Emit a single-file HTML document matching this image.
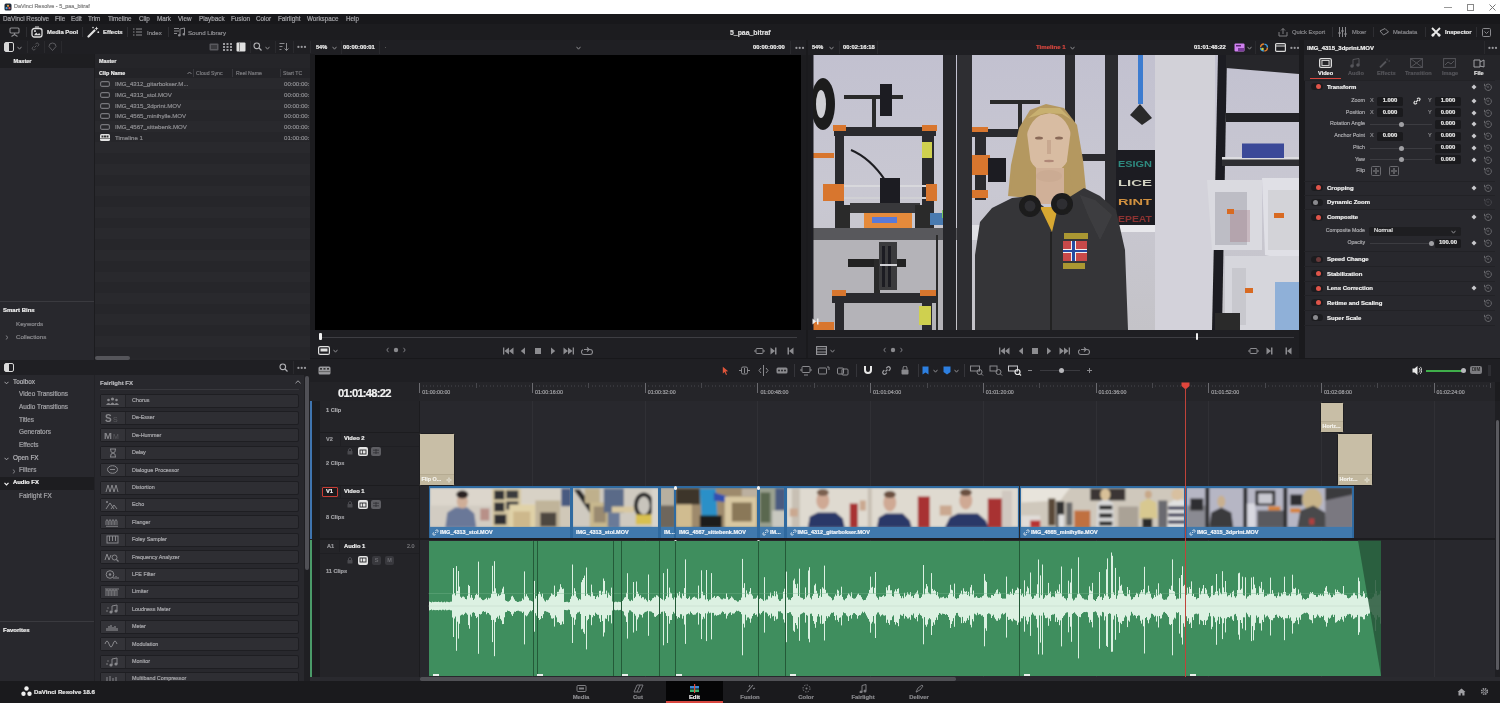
<!DOCTYPE html>
<html><head><meta charset="utf-8">
<style>
*{margin:0;padding:0;box-sizing:border-box}
html,body{width:1500px;height:703px;overflow:hidden;background:#1c1c1f;font-family:"Liberation Sans",sans-serif;color:#c8c8c8;position:relative}
.a{position:absolute;display:block}
.t{position:absolute;white-space:nowrap;line-height:1;-webkit-text-stroke:0.2px currentColor}
</style></head><body>
<div style="position:absolute;left:0;top:0;width:1500px;height:703px;will-change:transform">
<div class="a" style="left:0px;top:0px;width:1500px;height:14px;background:#ffffff;"></div>
<svg class="a" style="left:4px;top:3px;" width="8" height="8" viewBox="0 0 8 8"><rect x="0.5" y="0.5" width="7" height="7" rx="1.5" fill="#1d2a3a"/><circle cx="4" cy="2.8" r="1.1" fill="#e8a040"/><circle cx="2.6" cy="5.2" r="1.1" fill="#4aa0e0"/><circle cx="5.4" cy="5.2" r="1.1" fill="#e05050"/></svg>
<div class="t" style="left:14px;top:4.25px;font-size:5.5px;color:#808080;">DaVinci Resolve - 5_paa_bitraf</div>
<div class="a" style="left:1444px;top:7px;width:8px;height:1px;background:#999;"></div>
<div class="a" style="left:1467px;top:4px;width:7px;height:7px;border:1px solid #888"></div>
<svg class="a" style="left:1489px;top:3.5px;" width="7" height="7" viewBox="0 0 7 7"><path d="M0.5 0.5L6.5 6.5M6.5 0.5L0.5 6.5" stroke="#777" stroke-width="1"/></svg>
<div class="a" style="left:0px;top:14px;width:1500px;height:10px;background:#18181b;"></div>
<div class="t" style="left:3px;top:15.8px;font-size:6.3px;color:#a4a4a8;width:49px">DaVinci Resolve</div>
<div class="t" style="left:55px;top:15.8px;font-size:6.3px;color:#a4a4a8;width:13px">File</div>
<div class="t" style="left:71px;top:15.8px;font-size:6.3px;color:#a4a4a8;width:15px">Edit</div>
<div class="t" style="left:88px;top:15.8px;font-size:6.3px;color:#a4a4a8;width:17px">Trim</div>
<div class="t" style="left:108px;top:15.8px;font-size:6.3px;color:#a4a4a8;width:29px">Timeline</div>
<div class="t" style="left:139px;top:15.8px;font-size:6.3px;color:#a4a4a8;width:15px">Clip</div>
<div class="t" style="left:157px;top:15.8px;font-size:6.3px;color:#a4a4a8;width:19px">Mark</div>
<div class="t" style="left:178px;top:15.8px;font-size:6.3px;color:#a4a4a8;width:17px">View</div>
<div class="t" style="left:199px;top:15.8px;font-size:6.3px;color:#a4a4a8;width:29px">Playback</div>
<div class="t" style="left:231px;top:15.8px;font-size:6.3px;color:#a4a4a8;width:22px">Fusion</div>
<div class="t" style="left:256px;top:15.8px;font-size:6.3px;color:#a4a4a8;width:19px">Color</div>
<div class="t" style="left:278px;top:15.8px;font-size:6.3px;color:#a4a4a8;width:27px">Fairlight</div>
<div class="t" style="left:307px;top:15.8px;font-size:6.3px;color:#a4a4a8;width:36px">Workspace</div>
<div class="t" style="left:346px;top:15.8px;font-size:6.3px;color:#a4a4a8;width:17px">Help</div>
<div class="a" style="left:0px;top:24px;width:1500px;height:16px;background:#1c1c1f;"></div>
<div class="a" style="left:26px;top:27px;width:1px;height:10px;background:#2e2e32;"></div>
<div class="a" style="left:82px;top:27px;width:1px;height:10px;background:#2e2e32;"></div>
<div class="a" style="left:127px;top:27px;width:1px;height:10px;background:#2e2e32;"></div>
<div class="a" style="left:168px;top:27px;width:1px;height:10px;background:#2e2e32;"></div>
<svg class="a" style="left:9px;top:27px;" width="11" height="10" viewBox="0 0 11 10"><rect x="1" y="1" width="9" height="5" rx="1" fill="none" stroke="#8c8c90" stroke-width="1.1"/><path d="M5.5 6v1.5M2.5 9.5l3-2l3 2" stroke="#8c8c90" stroke-width="1.1" fill="none"/></svg>
<svg class="a" style="left:31px;top:26px;" width="12" height="12" viewBox="0 0 12 12"><rect x="1" y="2.5" width="10" height="8.5" rx="2.2" fill="none" stroke="#dcdcdc" stroke-width="1.3"/><path d="M3 9.2l2.2-2.6l1.6 1.6l1.4-1.2l1.6 2.2z" fill="#dcdcdc"/><rect x="3" y="4.3" width="2" height="1.5" fill="#dcdcdc"/><path d="M4 1h4" stroke="#dcdcdc" stroke-width="1"/></svg>
<div class="t" style="left:47px;top:30.25px;font-size:5.9px;color:#e6e6e6;font-weight:bold;">Media Pool</div>
<svg class="a" style="left:87px;top:26px;" width="13" height="12" viewBox="0 0 13 12"><path d="M1.5 10.5L7.5 4.5" stroke="#e0e0e0" stroke-width="2.2" stroke-linecap="round"/><path d="M9.5 0.5l0.6 1.4l1.4 0.6l-1.4 0.6l-0.6 1.4l-0.6-1.4l-1.4-0.6l1.4-0.6z" fill="#e0e0e0"/><circle cx="11.3" cy="6.2" r="0.9" fill="#e0e0e0"/><circle cx="6" cy="1.6" r="0.8" fill="#e0e0e0"/></svg>
<div class="t" style="left:103px;top:30.25px;font-size:5.9px;color:#e6e6e6;font-weight:bold;">Effects</div>
<svg class="a" style="left:133px;top:28px;" width="9" height="8" viewBox="0 0 9 8"><path d="M0 1h1.5M3 1h6M0 4h1.5M3 4h6M0 7h1.5M3 7h6" stroke="#8a8a8e" stroke-width="1"/></svg>
<div class="t" style="left:147px;top:30.20px;font-size:6px;color:#8e8e92;">Index</div>
<svg class="a" style="left:174px;top:27px;" width="11" height="10" viewBox="0 0 11 10"><path d="M0 1.5h5M0 4h5M0 6.5h3" stroke="#8a8a8e" stroke-width="1"/><path d="M6 8V2l4.5-1v6" stroke="#8a8a8e" stroke-width="1" fill="none"/><circle cx="5.3" cy="8.3" r="1.3" fill="#8a8a8e"/><circle cx="9.8" cy="7.3" r="1.3" fill="#8a8a8e"/></svg>
<div class="t" style="left:188px;top:30.15px;font-size:6.1px;color:#8e8e92;">Sound Library</div>
<div class="t" style="left:730px;top:29.75px;font-size:6.9px;color:#dcdcdc;font-weight:bold;">5_paa_bitraf</div>
<div class="a" style="left:1332px;top:27px;width:1px;height:10px;background:#2e2e32;"></div>
<div class="a" style="left:1373px;top:27px;width:1px;height:10px;background:#2e2e32;"></div>
<div class="a" style="left:1425px;top:27px;width:1px;height:10px;background:#2e2e32;"></div>
<div class="a" style="left:1476px;top:27px;width:1px;height:10px;background:#2e2e32;"></div>
<svg class="a" style="left:1278px;top:27px;" width="10" height="10" viewBox="0 0 10 10"><path d="M1 5v4h8V5" stroke="#7c7c80" fill="none" stroke-width="1"/><path d="M5 7V1.5M3 3.5l2-2l2 2" stroke="#7c7c80" fill="none" stroke-width="1"/></svg>
<div class="t" style="left:1292px;top:30.30px;font-size:5.8px;color:#86868a;">Quick Export</div>
<svg class="a" style="left:1338px;top:27px;" width="9" height="10" viewBox="0 0 9 10"><path d="M1.5 0v10M4.5 0v10M7.5 0v10" stroke="#8a8a8e" stroke-width="1"/><rect x="0.5" y="5" width="2" height="2" fill="#8a8a8e"/><rect x="3.5" y="3" width="2" height="2" fill="#8a8a8e"/><rect x="6.5" y="6" width="2" height="2" fill="#8a8a8e"/></svg>
<div class="t" style="left:1352px;top:30.30px;font-size:5.8px;color:#86868a;">Mixer</div>
<svg class="a" style="left:1379px;top:28px;" width="10" height="8" viewBox="0 0 10 8"><path d="M1 3l5-2.5l3.5 3.5l-5 3z" fill="none" stroke="#86868a" stroke-width="1"/></svg>
<div class="t" style="left:1393px;top:30.30px;font-size:5.8px;color:#86868a;">Metadata</div>
<svg class="a" style="left:1431px;top:27px;" width="10" height="10" viewBox="0 0 10 10"><path d="M1 1l8 8M9 1L1 9" stroke="#e8e8e8" stroke-width="1.8"/><circle cx="2" cy="8" r="1.5" fill="#e8e8e8"/><circle cx="8" cy="8" r="1.5" fill="#e8e8e8"/></svg>
<div class="t" style="left:1445px;top:30.25px;font-size:5.9px;color:#e8e8e8;font-weight:bold;">Inspector</div>
<svg class="a" style="left:1482px;top:28px;" width="9" height="9" viewBox="0 0 9 9"><rect x="0.5" y="0.5" width="8" height="8" rx="1" fill="none" stroke="#8a8a8e" stroke-width="1"/><path d="M2.5 3.5l2 2l2-2" stroke="#8a8a8e" fill="none" stroke-width="1"/></svg>
<div class="a" style="left:0px;top:40px;width:315px;height:14px;background:#1f1f23;"></div>
<div class="a" style="left:27px;top:41px;width:1px;height:12px;background:#2a2a2e;"></div>
<div class="a" style="left:44px;top:41px;width:1px;height:12px;background:#2a2a2e;"></div>
<div class="a" style="left:61px;top:41px;width:1px;height:12px;background:#2a2a2e;"></div>
<div class="a" style="left:250px;top:41px;width:1px;height:12px;background:#2a2a2e;"></div>
<div class="a" style="left:275px;top:41px;width:1px;height:12px;background:#2a2a2e;"></div>
<div class="a" style="left:293px;top:41px;width:1px;height:12px;background:#2a2a2e;"></div>
<div class="a" style="left:310px;top:41px;width:1px;height:12px;background:#2a2a2e;"></div>
<svg class="a" style="left:4px;top:42px;" width="10" height="10" viewBox="0 0 10 10"><rect x="0.5" y="0.5" width="9" height="9" rx="1.5" fill="none" stroke="#d8d8d8" stroke-width="1"/><rect x="1" y="1" width="4" height="8" fill="#d8d8d8"/></svg>
<svg class="a" style="left:17px;top:46px;" width="5" height="4" viewBox="0 0 5 4"><path d="M0.5 0.8L2.5 3.2L4.5 0.8" stroke="#8a8a8e" fill="none" stroke-width="1"/></svg>
<svg class="a" style="left:31px;top:42px;" width="9" height="9" viewBox="0 0 9 9"><path d="M3.5 5.5L5.5 3.5M2.5 4.5l-1 1a1.6 1.6 0 0 0 2.2 2.2l1-1M6.5 4.5l1-1a1.6 1.6 0 0 0-2.2-2.2l-1 1" stroke="#5c5c60" fill="none" stroke-width="1"/></svg>
<svg class="a" style="left:48px;top:42px;" width="9" height="9" viewBox="0 0 9 9"><path d="M1 4.5a3.5 3.5 0 1 1 7 0l-3.5 4z" stroke="#5c5c60" fill="none" stroke-width="1"/></svg>
<svg class="a" style="left:209px;top:43px;" width="10" height="8" viewBox="0 0 10 8"><rect x="0.5" y="0.5" width="9" height="7" rx="1" fill="#59595e"/><rect x="2" y="2" width="6" height="4" fill="#3a3a3e"/></svg>
<svg class="a" style="left:223px;top:43px;" width="9" height="8" viewBox="0 0 9 8"><g fill="#9a9a9e"><rect x="0" y="0" width="2" height="2"/><rect x="3.5" y="0" width="2" height="2"/><rect x="7" y="0" width="2" height="2"/><rect x="0" y="3" width="2" height="2"/><rect x="3.5" y="3" width="2" height="2"/><rect x="7" y="3" width="2" height="2"/><rect x="0" y="6" width="2" height="2"/><rect x="3.5" y="6" width="2" height="2"/><rect x="7" y="6" width="2" height="2"/></g></svg>
<svg class="a" style="left:236px;top:42px;" width="10" height="10" viewBox="0 0 10 10"><rect x="0.5" y="0.5" width="9" height="9" rx="1" fill="#e0e0e0"/><rect x="3" y="1" width="0.8" height="8" fill="#777"/></svg>
<svg class="a" style="left:253px;top:42px;" width="9" height="9" viewBox="0 0 9 9"><circle cx="3.8" cy="3.8" r="2.8" stroke="#b0b0b4" fill="none" stroke-width="1.1"/><path d="M6 6l2.5 2.5" stroke="#b0b0b4" stroke-width="1.2"/></svg>
<svg class="a" style="left:265px;top:46px;" width="5" height="4" viewBox="0 0 5 4"><path d="M0.5 0.8L2.5 3.2L4.5 0.8" stroke="#8a8a8e" fill="none" stroke-width="1"/></svg>
<svg class="a" style="left:279px;top:42px;" width="10" height="10" viewBox="0 0 10 10"><path d="M0.5 1.5h5M0.5 4.5h3M0.5 7.5h2" stroke="#8a8a8e" stroke-width="1"/><path d="M7.5 1v7.5M5.5 6.5l2 2l2-2" stroke="#8a8a8e" fill="none" stroke-width="1"/></svg>
<svg class="a" style="left:296.5px;top:45.2px;" width="11" height="4" viewBox="0 0 11 4"><circle cx="1.4" cy="1.9" r="1.1" fill="#9a9a9e"/><circle cx="4.7" cy="1.9" r="1.1" fill="#9a9a9e"/><circle cx="8" cy="1.9" r="1.1" fill="#9a9a9e"/></svg>
<div class="a" style="left:0px;top:54px;width:95px;height:306px;background:#28282d;"></div>
<div class="a" style="left:0px;top:54px;width:95px;height:14px;background:#1e1e21;"></div>
<div class="t" style="left:13.5px;top:58.50px;font-size:5.6px;color:#f0f0f0;font-weight:bold;">Master</div>
<div class="a" style="left:0px;top:301px;width:95px;height:1px;background:#3a3a3f;"></div>
<div class="t" style="left:3px;top:307.30px;font-size:6.0px;color:#f0f0f0;font-weight:bold;">Smart Bins</div>
<div class="t" style="left:16px;top:321.40px;font-size:6.2px;color:#8c8c90;">Keywords</div>
<div class="t" style="left:16px;top:334.20px;font-size:6.2px;color:#8c8c90;">Collections</div>
<svg class="a" style="left:5px;top:335px;" width="4" height="5" viewBox="0 0 4 5"><path d="M0.8 0.5L3 2.5L0.8 4.5" stroke="#8a8a8e" fill="none" stroke-width="0.9"/></svg>
<div class="a" style="left:95px;top:54px;width:215px;height:306px;background:#27272b;"></div>
<div class="a" style="left:94px;top:54px;width:1px;height:306px;background:#1c1c1f;"></div>
<div class="a" style="left:95px;top:54px;width:215px;height:14px;background:#252529;"></div>
<div class="t" style="left:99px;top:58.80px;font-size:5.4px;color:#e8e8e8;font-weight:bold;">Master</div>
<div class="a" style="left:95px;top:68px;width:215px;height:10px;background:#232327;"></div>
<div class="t" style="left:99px;top:70.80px;font-size:5.4px;color:#ececec;font-weight:bold;">Clip Name</div>
<svg class="a" style="left:187px;top:71px;" width="5" height="4" viewBox="0 0 5 4"><path d="M0.5 3L2.5 1L4.5 3" stroke="#8a8a8e" fill="none" stroke-width="0.9"/></svg>
<div class="a" style="left:193px;top:69px;width:1px;height:8px;background:#38383d;"></div>
<div class="a" style="left:232px;top:69px;width:1px;height:8px;background:#38383d;"></div>
<div class="a" style="left:280px;top:69px;width:1px;height:8px;background:#38383d;"></div>
<div class="t" style="left:196px;top:70.90px;font-size:5.2px;color:#7a7a7e;">Cloud Sync</div>
<div class="t" style="left:236px;top:70.90px;font-size:5.2px;color:#7a7a7e;">Reel Name</div>
<div class="t" style="left:283px;top:70.90px;font-size:5.2px;color:#7a7a7e;">Start TC</div>
<div class="a" style="left:95px;top:78px;width:215px;height:11px;background:#29292d;"></div>
<div class="a" style="left:95px;top:89px;width:215px;height:11px;background:#26262a;"></div>
<div class="a" style="left:95px;top:100px;width:215px;height:11px;background:#29292d;"></div>
<div class="a" style="left:95px;top:110px;width:215px;height:11px;background:#26262a;"></div>
<div class="a" style="left:95px;top:121px;width:215px;height:11px;background:#29292d;"></div>
<div class="a" style="left:95px;top:132px;width:215px;height:11px;background:#26262a;"></div>
<div class="a" style="left:95px;top:142px;width:215px;height:11px;background:#29292d;"></div>
<div class="a" style="left:95px;top:153px;width:215px;height:11px;background:#26262a;"></div>
<div class="a" style="left:95px;top:164px;width:215px;height:11px;background:#29292d;"></div>
<div class="a" style="left:95px;top:175px;width:215px;height:11px;background:#26262a;"></div>
<div class="a" style="left:95px;top:186px;width:215px;height:11px;background:#29292d;"></div>
<div class="a" style="left:95px;top:196px;width:215px;height:11px;background:#26262a;"></div>
<div class="a" style="left:95px;top:207px;width:215px;height:11px;background:#29292d;"></div>
<div class="a" style="left:95px;top:218px;width:215px;height:11px;background:#26262a;"></div>
<div class="a" style="left:95px;top:228px;width:215px;height:11px;background:#29292d;"></div>
<div class="a" style="left:95px;top:239px;width:215px;height:11px;background:#26262a;"></div>
<div class="a" style="left:95px;top:250px;width:215px;height:11px;background:#29292d;"></div>
<div class="a" style="left:95px;top:261px;width:215px;height:11px;background:#26262a;"></div>
<div class="a" style="left:95px;top:272px;width:215px;height:11px;background:#29292d;"></div>
<div class="a" style="left:95px;top:282px;width:215px;height:11px;background:#26262a;"></div>
<div class="a" style="left:95px;top:293px;width:215px;height:11px;background:#29292d;"></div>
<div class="a" style="left:95px;top:304px;width:215px;height:11px;background:#26262a;"></div>
<div class="a" style="left:95px;top:314px;width:215px;height:11px;background:#29292d;"></div>
<div class="a" style="left:95px;top:325px;width:215px;height:11px;background:#26262a;"></div>
<div class="a" style="left:95px;top:336px;width:215px;height:11px;background:#29292d;"></div>
<div class="a" style="left:95px;top:347px;width:215px;height:11px;background:#26262a;"></div>
<svg class="a" style="left:100px;top:81.2px;" width="10" height="6" viewBox="0 0 10 6"><rect x="0.6" y="0.6" width="8.8" height="4.8" rx="1.5" fill="none" stroke="#77777c" stroke-width="1.1"/></svg>
<div class="t" style="left:115px;top:81.15px;font-size:6.1px;color:#8e8e92;">IMG_4312_gitarbokser.M...</div>
<div class="t" style="left:284px;top:81.15px;font-size:6.1px;color:#8e8e92;">00:00:00:</div>
<svg class="a" style="left:100px;top:91.95px;" width="10" height="6" viewBox="0 0 10 6"><rect x="0.6" y="0.6" width="8.8" height="4.8" rx="1.5" fill="none" stroke="#77777c" stroke-width="1.1"/></svg>
<div class="t" style="left:115px;top:91.90px;font-size:6.1px;color:#8e8e92;">IMG_4313_stol.MOV</div>
<div class="t" style="left:284px;top:91.90px;font-size:6.1px;color:#8e8e92;">00:00:00:</div>
<svg class="a" style="left:100px;top:102.7px;" width="10" height="6" viewBox="0 0 10 6"><rect x="0.6" y="0.6" width="8.8" height="4.8" rx="1.5" fill="none" stroke="#77777c" stroke-width="1.1"/></svg>
<div class="t" style="left:115px;top:102.65px;font-size:6.1px;color:#8e8e92;">IMG_4315_3dprint.MOV</div>
<div class="t" style="left:284px;top:102.65px;font-size:6.1px;color:#8e8e92;">00:00:00:</div>
<svg class="a" style="left:100px;top:113.45px;" width="10" height="6" viewBox="0 0 10 6"><rect x="0.6" y="0.6" width="8.8" height="4.8" rx="1.5" fill="none" stroke="#77777c" stroke-width="1.1"/></svg>
<div class="t" style="left:115px;top:113.40px;font-size:6.1px;color:#8e8e92;">IMG_4565_minihylle.MOV</div>
<div class="t" style="left:284px;top:113.40px;font-size:6.1px;color:#8e8e92;">00:00:00:</div>
<svg class="a" style="left:100px;top:124.2px;" width="10" height="6" viewBox="0 0 10 6"><rect x="0.6" y="0.6" width="8.8" height="4.8" rx="1.5" fill="none" stroke="#77777c" stroke-width="1.1"/></svg>
<div class="t" style="left:115px;top:124.15px;font-size:6.1px;color:#8e8e92;">IMG_4567_sittebenk.MOV</div>
<div class="t" style="left:284px;top:124.15px;font-size:6.1px;color:#8e8e92;">00:00:00:</div>
<svg class="a" style="left:100px;top:134.45px;" width="10" height="7" viewBox="0 0 10 7"><rect x="0" y="0" width="10" height="7" rx="1.5" fill="#e4e4e4"/><rect x="1.5" y="1.5" width="2" height="2" fill="#333"/><rect x="4" y="1.5" width="2" height="2" fill="#333"/><rect x="6.5" y="1.5" width="2" height="2" fill="#333"/><rect x="0" y="4.3" width="10" height="0.7" fill="#555"/></svg>
<div class="t" style="left:115px;top:134.90px;font-size:6.1px;color:#8e8e92;">Timeline 1</div>
<div class="t" style="left:284px;top:134.90px;font-size:6.1px;color:#8e8e92;">01:00:00:</div>
<div class="a" style="left:95px;top:356px;width:35px;height:4px;background:#55555a;border-radius:2px"></div>
<div class="a" style="left:310px;top:54px;width:5px;height:276px;background:#1c1c1f;"></div>
<div class="a" style="left:315px;top:40px;width:491px;height:15px;background:#1f1f23;"></div>
<div class="a" style="left:806px;top:40px;width:2px;height:318px;background:#1a1a1d;"></div>
<div class="t" style="left:316px;top:44.70px;font-size:5.6px;color:#e8e8e8;font-weight:bold;">54%</div>
<svg class="a" style="left:332px;top:46px;" width="5" height="4" viewBox="0 0 5 4"><path d="M0.5 0.8L2.5 3.2L4.5 0.8" stroke="#8a8a8e" fill="none" stroke-width="1"/></svg>
<div class="a" style="left:341px;top:41px;width:1px;height:13px;background:#2a2a2e;"></div>
<div class="t" style="left:343px;top:44.58px;font-size:5.85px;color:#f0f0f0;font-weight:bold;">00:00:00:01</div>
<div class="a" style="left:379px;top:41px;width:1px;height:13px;background:#2a2a2e;"></div>
<div class="a" style="left:385px;top:47px;width:1px;height:1px;background:#555;"></div>
<svg class="a" style="left:576px;top:46px;" width="5" height="4" viewBox="0 0 5 4"><path d="M0.5 0.8L2.5 3.2L4.5 0.8" stroke="#8a8a8e" fill="none" stroke-width="1"/></svg>
<div class="t" style="left:753px;top:44.58px;font-size:5.85px;color:#f0f0f0;font-weight:bold;">00:00:00:00</div>
<div class="a" style="left:790px;top:41px;width:1px;height:13px;background:#2a2a2e;"></div>
<svg class="a" style="left:794.5px;top:45.5px;" width="11" height="4" viewBox="0 0 11 4"><circle cx="1.4" cy="1.9" r="1.1" fill="#9a9a9e"/><circle cx="4.7" cy="1.9" r="1.1" fill="#9a9a9e"/><circle cx="8" cy="1.9" r="1.1" fill="#9a9a9e"/></svg>
<div class="a" style="left:315px;top:55px;width:486px;height:275px;background:#000;"></div>
<div class="a" style="left:801px;top:55px;width:5px;height:275px;background:#1c1c1f;"></div>
<div class="a" style="left:310px;top:330px;width:496px;height:28px;background:#1f1f23;"></div>
<div class="a" style="left:320px;top:336.5px;width:477px;height:1.2px;background:#3e3e43;"></div>
<div class="a" style="left:319px;top:333px;width:2.5px;height:7px;background:#f0f0f0;border-radius:1px"></div>
<svg class="a" style="left:318px;top:346px;" width="12" height="9" viewBox="0 0 12 9"><rect x="0.6" y="0.6" width="10.8" height="7.8" rx="1.5" fill="none" stroke="#e0e0e0" stroke-width="1.2"/><rect x="2.5" y="2.5" width="7" height="3" fill="#e0e0e0"/></svg>
<svg class="a" style="left:333px;top:349px;" width="5" height="4" viewBox="0 0 5 4"><path d="M0.5 0.8L2.5 3.2L4.5 0.8" stroke="#8a8a8e" fill="none" stroke-width="1"/></svg>
<svg class="a" style="left:386px;top:347px;" width="20" height="6" viewBox="0 0 20 6"><path d="M2.5 0.8L0.8 3L2.5 5.2M17.5 0.8L19.2 3L17.5 5.2" stroke="#8a8a8e" fill="none" stroke-width="0.9"/><circle cx="10" cy="3" r="2.2" fill="#8a8a8e"/></svg>
<svg class="a" style="left:503px;top:346.5px;" width="11" height="8" viewBox="0 0 11 8"><rect x="0" y="0.5" width="1.3" height="7" fill="#8c8c90"/><path d="M6 0.5L1.5 4L6 7.5zM10.5 0.5L6 4L10.5 7.5z" fill="#8c8c90"/></svg>
<svg class="a" style="left:520px;top:346.5px;" width="6" height="8" viewBox="0 0 6 8"><path d="M5 0.5L0.8 4L5 7.5z" fill="#8c8c90"/></svg>
<svg class="a" style="left:534px;top:346.5px;" width="8" height="8" viewBox="0 0 8 8"><rect x="1" y="1" width="6" height="6" fill="#8c8c90"/></svg>
<svg class="a" style="left:550px;top:346.5px;" width="6" height="8" viewBox="0 0 6 8"><path d="M1 0.5L5.2 4L1 7.5z" fill="#8c8c90"/></svg>
<svg class="a" style="left:563px;top:346.5px;" width="11" height="8" viewBox="0 0 11 8"><path d="M0.5 0.5L5 4L0.5 7.5zM5 0.5L9.5 4L5 7.5z" fill="#8c8c90"/><rect x="9.7" y="0.5" width="1.3" height="7" fill="#8c8c90"/></svg>
<svg class="a" style="left:581px;top:346.5px;" width="12" height="9" viewBox="0 0 12 9"><path d="M3 2.5h6a2.5 2.5 0 0 1 0 5H3a2.5 2.5 0 0 1-1-4.8" stroke="#8c8c90" fill="none" stroke-width="1.1"/><path d="M6 0.5l2.2 2l-2.2 2" stroke="#8c8c90" fill="none" stroke-width="1.1"/></svg>
<svg class="a" style="left:754px;top:346.5px;" width="11" height="8" viewBox="0 0 11 8"><rect x="2" y="1.5" width="7" height="5" rx="1" stroke="#8c8c90" fill="none" stroke-width="1"/><path d="M0 4h2M9 4h2" stroke="#8c8c90"/></svg>
<svg class="a" style="left:770px;top:346.5px;" width="7" height="8" viewBox="0 0 7 8"><path d="M0.5 0.5L5 4L0.5 7.5z" fill="#8c8c90"/><rect x="5" y="0.5" width="1.5" height="7" fill="#8c8c90"/></svg>
<svg class="a" style="left:787px;top:346.5px;" width="7" height="8" viewBox="0 0 7 8"><rect x="0.5" y="0.5" width="1.5" height="7" fill="#8c8c90"/><path d="M6.5 0.5L2 4L6.5 7.5z" fill="#8c8c90"/></svg>
<div class="a" style="left:808px;top:40px;width:495px;height:15px;background:#1f1f23;"></div>
<div class="t" style="left:812px;top:44.70px;font-size:5.6px;color:#e8e8e8;font-weight:bold;">54%</div>
<svg class="a" style="left:829px;top:46px;" width="5" height="4" viewBox="0 0 5 4"><path d="M0.5 0.8L2.5 3.2L4.5 0.8" stroke="#8a8a8e" fill="none" stroke-width="1"/></svg>
<div class="a" style="left:839px;top:41px;width:1px;height:13px;background:#2a2a2e;"></div>
<div class="t" style="left:843px;top:44.58px;font-size:5.85px;color:#f0f0f0;font-weight:bold;">00:02:16:18</div>
<div class="a" style="left:877px;top:41px;width:1px;height:13px;background:#2a2a2e;"></div>
<div class="t" style="left:1036px;top:44.45px;font-size:6.1px;color:#d8473f;font-weight:bold;">Timeline 1</div>
<svg class="a" style="left:1070px;top:46px;" width="5" height="4" viewBox="0 0 5 4"><path d="M0.5 0.8L2.5 3.2L4.5 0.8" stroke="#8a8a8e" fill="none" stroke-width="1"/></svg>
<div class="t" style="left:1194px;top:44.58px;font-size:5.85px;color:#f0f0f0;font-weight:bold;">01:01:48:22</div>
<svg class="a" style="left:1234px;top:43px;" width="11" height="9" viewBox="0 0 11 9"><rect x="0.5" y="0.5" width="10" height="8" rx="1" fill="#d080f0"/><rect x="2" y="2" width="5" height="1.5" fill="#5a2a70"/><rect x="4" y="5" width="6" height="3" fill="#7b3a9a"/></svg>
<svg class="a" style="left:1247px;top:46px;" width="5" height="4" viewBox="0 0 5 4"><path d="M0.5 0.8L2.5 3.2L4.5 0.8" stroke="#8a8a8e" fill="none" stroke-width="1"/></svg>
<div class="a" style="left:1255px;top:41px;width:1px;height:13px;background:#2a2a2e;"></div>
<svg class="a" style="left:1259px;top:43px;" width="10" height="9" viewBox="0 0 10 9"><circle cx="5" cy="4.5" r="3.5" stroke="#e08030" fill="none" stroke-width="1.3" stroke-dasharray="5 6"/><circle cx="5" cy="4.5" r="3.5" stroke="#40a0e0" fill="none" stroke-width="1.3" stroke-dasharray="5 6" stroke-dashoffset="5.5"/><circle cx="3.5" cy="6" r="1.3" fill="#d0d040"/></svg>
<svg class="a" style="left:1275px;top:43px;" width="11" height="9" viewBox="0 0 11 9"><rect x="0.6" y="0.6" width="9.8" height="7.8" rx="1" stroke="#d8d8d8" fill="none" stroke-width="1.2"/><rect x="0.6" y="2.5" width="9.8" height="1" fill="#d8d8d8"/></svg>
<svg class="a" style="left:1289.5px;top:45.5px;" width="11" height="4" viewBox="0 0 11 4"><circle cx="1.4" cy="1.9" r="1.1" fill="#9a9a9e"/><circle cx="4.7" cy="1.9" r="1.1" fill="#9a9a9e"/><circle cx="8" cy="1.9" r="1.1" fill="#9a9a9e"/></svg>
<svg class="a" style="left:811px;top:55px;" width="488" height="275" viewBox="0 0 488 275"><defs><linearGradient id="wall" x1="0" y1="0" x2="0" y2="1"><stop offset="0" stop-color="#c2c1d0"/><stop offset="0.5" stop-color="#c9c8d2"/><stop offset="1" stop-color="#c4c3c8"/></linearGradient><filter id="bl" x="-5%" y="-5%" width="110%" height="110%"><feGaussianBlur stdDeviation="0.7"/></filter></defs><g filter="url(#bl)"><rect x="0" y="0" width="488" height="275" fill="url(#wall)" /><rect x="0" y="185" width="134" height="90" fill="#b4b3b8" /><rect x="344" y="0" width="60" height="275" fill="#d2d1d8" /><ellipse cx="12" cy="49" rx="12" ry="26" fill="#1c1c1e" /><ellipse cx="10" cy="49" rx="5" ry="14" fill="#cfcfd4" /><rect x="33" y="40" width="59" height="4" fill="#2a2a2c" /><rect x="61" y="40" width="4" height="32" fill="#2a2a2c" /><rect x="69" y="29" width="12" height="32" fill="#1e1e20" /><rect x="23" y="72" width="102" height="9" fill="#2c2c2e" /><rect x="24" y="72" width="9" height="101" fill="#2c2c2e" /><rect x="111" y="72" width="12" height="101" fill="#2c2c2e" /><rect x="22" y="70" width="13" height="6" fill="#d8762e" /><rect x="111" y="70" width="15" height="6" fill="#d8762e" /><rect x="111" y="87" width="10" height="16" fill="#cfd050" /><rect x="0" y="98" width="23" height="5" fill="#d8762e" /><path d="M40 95 Q59 103 74 125" stroke="#1e1e20" stroke-width="2" fill="none"/><rect x="12" y="129" width="21" height="17" fill="#d8762e" /><rect x="115" y="129" width="11" height="17" fill="#d8762e" /><rect x="33" y="130" width="82" height="2" fill="#d8d8dc" /><rect x="33" y="142" width="82" height="2" fill="#d0d0d4" /><rect x="69" y="123" width="20" height="27" fill="#1f1f21" /><rect x="39" y="148" width="70" height="10" fill="#38383a" /><rect x="25" y="150" width="14" height="23" fill="#2a2a2c" /><rect x="104" y="150" width="15" height="23" fill="#2a2a2c" /><rect x="53" y="158" width="48" height="17" fill="#e58a3a" /><rect x="61" y="162" width="25" height="6" fill="#5a7ad8" /><rect x="0" y="173" width="155" height="12" fill="#58585c" /><rect x="119" y="158" width="16" height="12" fill="#4a7ab0" /><rect x="131" y="155" width="8" height="8" fill="#7ac860" /><rect x="37" y="204" width="58" height="8" fill="#222224" /><rect x="63" y="204" width="6" height="37" fill="#2a2a2c" /><rect x="68" y="187" width="18" height="48" fill="#3a3a3c" /><rect x="71" y="191" width="3" height="41" fill="#1e1e20" /><rect x="77" y="191" width="3" height="41" fill="#1e1e20" /><rect x="69" y="209" width="17" height="2" fill="#d0d0d4" /><rect x="21" y="238" width="104" height="10" fill="#2c2c2e" /><rect x="24" y="238" width="9" height="37" fill="#2c2c2e" /><rect x="111" y="238" width="10" height="37" fill="#2c2c2e" /><rect x="21" y="235" width="14" height="6" fill="#d8762e" /><rect x="109" y="235" width="16" height="6" fill="#d8762e" /><rect x="108" y="251" width="12" height="19" fill="#cfd050" /><rect x="0" y="267" width="23" height="8" fill="#d8762e" /><rect x="125" y="180" width="2" height="95" fill="#2a2a2c" /><rect x="132" y="0" width="13" height="275" fill="#27272a" /><rect x="146" y="0" width="15" height="275" fill="#2f2f32" /><rect x="161" y="170" width="18" height="15" fill="#e0e0e4" /><rect x="161" y="74" width="48" height="8" fill="#2c2c2e" /><rect x="164" y="74" width="11" height="71" fill="#2c2c2e" /><rect x="161" y="72" width="16" height="5" fill="#d8762e" /><rect x="161" y="100" width="18" height="20" fill="#d8762e" /><rect x="177" y="103" width="18" height="24" fill="#1f1f21" /><rect x="179" y="45" width="50" height="4" fill="#2a2a2c" /><rect x="207" y="45" width="4" height="30" fill="#2a2a2c" /><rect x="161" y="135" width="16" height="8" fill="#d8762e" /><rect x="254" y="0" width="10" height="105" fill="#2b2b2e" /><rect x="294" y="0" width="13" height="275" fill="#2b2b2e" /><rect x="264" y="99" width="31" height="7" fill="#2b2b2e" /><rect x="327" y="0" width="5" height="49" fill="#3c7cd0" /><path d="M319,60 L329,49 L341,63 L331,70Z" fill="#2a2a2c" /><rect x="305" y="95" width="44" height="82" fill="#e8e8ec" /><rect x="305" y="95" width="40" height="75" fill="#1f1f22" /><text x="307" y="112" font-size="8.5" font-weight="bold" textLength="34" lengthAdjust="spacingAndGlyphs" fill="#2e8a80" font-family="Liberation Sans">ESIGN</text><text x="307" y="131" font-size="8.5" font-weight="bold" textLength="34" lengthAdjust="spacingAndGlyphs" fill="#d0d0c0" font-family="Liberation Sans">LICE</text><text x="307" y="150" font-size="8.5" font-weight="bold" textLength="34" lengthAdjust="spacingAndGlyphs" fill="#d09040" font-family="Liberation Sans">RINT</text><text x="307" y="167" font-size="8.5" font-weight="bold" textLength="34" lengthAdjust="spacingAndGlyphs" fill="#8a3030" font-family="Liberation Sans">EPEAT</text><rect x="344" y="45" width="58" height="230" fill="#d3d2da" /><path d="M407,0 L416,0 L411,275 L401,275Z" fill="#1f1f22" /><path d="M415,0 L488,0 L488,19 L415,13Z" fill="#27272a" /><rect x="415" y="58" width="73" height="9" fill="#222225" /><rect x="411" y="103" width="77" height="8" fill="#2e2e30" /><rect x="411" y="102" width="77" height="2.5" fill="#dcdce0" /><rect x="431" y="88.5" width="42" height="14.5" fill="#3a4898" /><path d="M396,125 L451,125 L451,195 L401,195Z" fill="#dadae0" /><path d="M451,123 L488,123 L488,207 L454,200Z" fill="#e0e0e6" /><rect x="404" y="137" width="32" height="53" fill="#9a9aa4" fill-opacity="0.45"/><rect x="419" y="155" width="20" height="32" fill="#a06a78" fill-opacity="0.3"/><rect x="457" y="135" width="31" height="60" fill="#cfd0d4" fill-opacity="0.8"/><rect x="414" y="201" width="74" height="74" fill="#d6d6dc" /><rect x="421" y="213" width="14" height="57" fill="#c8c8ce" /><rect x="464" y="227" width="24" height="48" fill="#8fb0d8" /><rect x="416" y="154" width="7" height="5" fill="#d86a20" /><rect x="463" y="158" width="10" height="5" fill="#d86a20" /><rect x="434" y="233" width="8" height="5" fill="#d86a20" /><rect x="404" y="258" width="25" height="17" fill="#2a2a2c" /><path d="M197,141 L200,110 L208,73 L219,55 L235,49 L253,53 L266,70 L272,105 L275,135 L259,143 L217,143Z" fill="#b49860" /><ellipse cx="238" cy="88" rx="23" ry="30" fill="#d8bca2" /><path d="M199,140 L207,95 L215,70 L220,110 L213,140Z" fill="#b49860" /><path d="M274,137 L268,95 L261,67 L256,105 L263,140Z" fill="#b49860" /><path d="M217,63 L235,50 L259,63 L239,58Z" fill="#b49860" /><rect x="225" y="113" width="28" height="36" fill="#d0b098" /><ellipse cx="228" cy="83" rx="4" ry="1.6" fill="#8a6a58" /><ellipse cx="248" cy="83" rx="4" ry="1.6" fill="#8a6a58" /><rect x="236" y="85" width="4" height="14" fill="#c8a890" /><ellipse cx="238" cy="106" rx="5" ry="1.2" fill="#b08878" /><ellipse cx="238" cy="121" rx="13" ry="6" fill="#c8a890" fill-opacity="0.6"/><path d="M217,63 L229,53 L249,53 L261,65 L251,59 L235,58Z" fill="#c8b070" /><path d="M164,275 L164,200 L169,167 L181,153 L201,143 L219,141 L237,155 L257,143 L273,133 L289,141 L305,155 L314,195 L317,275Z" fill="#353537" /><path d="M269,140 L284,145 L301,160 L289,185 L277,160Z" fill="#3e3e40" /><path d="M229,152 L247,152 L241,177Z" fill="#d8a830" /><ellipse cx="219" cy="151" rx="11" ry="11" fill="#1c1c1e" /><ellipse cx="251" cy="149" rx="11" ry="11" fill="#1c1c1e" /><ellipse cx="219" cy="151" rx="5.5" ry="5.5" fill="#2e2e30" /><ellipse cx="251" cy="149" rx="5.5" ry="5.5" fill="#2e2e30" /><rect x="252" y="186" width="24" height="20" fill="#c84848" /><rect x="260" y="186" width="5" height="20" fill="#f0f0f0" /><rect x="252" y="194" width="24" height="4" fill="#f0f0f0" /><rect x="261" y="186" width="3" height="20" fill="#2848a0" /><rect x="252" y="195" width="24" height="2" fill="#2848a0" /><rect x="253" y="178" width="24" height="6" fill="#c8b030" fill-opacity="0.8"/><rect x="252" y="208" width="22" height="6" fill="#c8b030" fill-opacity="0.8"/><rect x="239" y="177" width="2" height="98" fill="#222224" /><rect x="0" y="0" width="2.5" height="275" fill="#1e1e20" /></g></svg>
<svg class="a" style="left:812px;top:318px;" width="7" height="7" viewBox="0 0 7 7"><path d="M0.5 0.5L4 3.5L0.5 6.5z" fill="#f0f0f0"/><rect x="5" y="0.5" width="1.5" height="6" fill="#f0f0f0"/></svg>
<div class="a" style="left:808px;top:330px;width:495px;height:28px;background:#1f1f23;"></div>
<div class="a" style="left:816px;top:336.5px;width:478px;height:1.2px;background:#3e3e43;"></div>
<div class="a" style="left:1195.5px;top:333px;width:2.5px;height:7px;background:#f0f0f0;border-radius:1px"></div>
<svg class="a" style="left:816px;top:346px;" width="11" height="9" viewBox="0 0 11 9"><rect x="0.6" y="0.6" width="9.8" height="7.8" stroke="#9a9a9e" fill="none" stroke-width="1.1"/><rect x="0.6" y="2.5" width="9.8" height="1" fill="#9a9a9e"/><rect x="0.6" y="5.5" width="9.8" height="1" fill="#9a9a9e"/></svg>
<svg class="a" style="left:830px;top:349px;" width="5" height="4" viewBox="0 0 5 4"><path d="M0.5 0.8L2.5 3.2L4.5 0.8" stroke="#8a8a8e" fill="none" stroke-width="1"/></svg>
<svg class="a" style="left:883px;top:347px;" width="20" height="6" viewBox="0 0 20 6"><path d="M2.5 0.8L0.8 3L2.5 5.2M17.5 0.8L19.2 3L17.5 5.2" stroke="#8a8a8e" fill="none" stroke-width="0.9"/><circle cx="10" cy="3" r="2.2" fill="#8a8a8e"/></svg>
<svg class="a" style="left:999px;top:346.5px;" width="11" height="8" viewBox="0 0 11 8"><rect x="0" y="0.5" width="1.3" height="7" fill="#8c8c90"/><path d="M6 0.5L1.5 4L6 7.5zM10.5 0.5L6 4L10.5 7.5z" fill="#8c8c90"/></svg>
<svg class="a" style="left:1018px;top:346.5px;" width="6" height="8" viewBox="0 0 6 8"><path d="M5 0.5L0.8 4L5 7.5z" fill="#8c8c90"/></svg>
<svg class="a" style="left:1031px;top:346.5px;" width="8" height="8" viewBox="0 0 8 8"><rect x="1" y="1" width="6" height="6" fill="#8c8c90"/></svg>
<svg class="a" style="left:1046px;top:346.5px;" width="6" height="8" viewBox="0 0 6 8"><path d="M1 0.5L5.2 4L1 7.5z" fill="#8c8c90"/></svg>
<svg class="a" style="left:1059px;top:346.5px;" width="11" height="8" viewBox="0 0 11 8"><path d="M0.5 0.5L5 4L0.5 7.5zM5 0.5L9.5 4L5 7.5z" fill="#8c8c90"/><rect x="9.7" y="0.5" width="1.3" height="7" fill="#8c8c90"/></svg>
<svg class="a" style="left:1078px;top:346.5px;" width="12" height="9" viewBox="0 0 12 9"><path d="M3 2.5h6a2.5 2.5 0 0 1 0 5H3a2.5 2.5 0 0 1-1-4.8" stroke="#8c8c90" fill="none" stroke-width="1.1"/><path d="M6 0.5l2.2 2l-2.2 2" stroke="#8c8c90" fill="none" stroke-width="1.1"/></svg>
<svg class="a" style="left:1248px;top:346.5px;" width="11" height="8" viewBox="0 0 11 8"><rect x="2" y="1.5" width="7" height="5" rx="1" stroke="#8c8c90" fill="none" stroke-width="1"/><path d="M0 4h2M9 4h2" stroke="#8c8c90"/></svg>
<svg class="a" style="left:1266px;top:346.5px;" width="7" height="8" viewBox="0 0 7 8"><path d="M0.5 0.5L5 4L0.5 7.5z" fill="#8c8c90"/><rect x="5" y="0.5" width="1.5" height="7" fill="#8c8c90"/></svg>
<svg class="a" style="left:1285px;top:346.5px;" width="7" height="8" viewBox="0 0 7 8"><rect x="0.5" y="0.5" width="1.5" height="7" fill="#8c8c90"/><path d="M6.5 0.5L2 4L6.5 7.5z" fill="#8c8c90"/></svg>
<div class="a" style="left:1299px;top:40px;width:4px;height:318px;background:#1a1a1d;"></div>
<div class="a" style="left:1303px;top:40px;width:197px;height:318px;background:#28282d;"></div>
<div class="a" style="left:1303px;top:40px;width:1.5px;height:318px;background:#1a1a1d;"></div>
<div class="a" style="left:1304px;top:40px;width:196px;height:15px;background:#1f1f23;"></div>
<div class="t" style="left:1307px;top:44.60px;font-size:6.0px;color:#f0f0f0;font-weight:bold;">IMG_4315_3dprint.MOV</div>
<div class="a" style="left:1484px;top:41px;width:1px;height:13px;background:#2a2a2e;"></div>
<svg class="a" style="left:1487.5px;top:45.5px;" width="11" height="4" viewBox="0 0 11 4"><circle cx="1.4" cy="1.9" r="1.1" fill="#9a9a9e"/><circle cx="4.7" cy="1.9" r="1.1" fill="#9a9a9e"/><circle cx="8" cy="1.9" r="1.1" fill="#9a9a9e"/></svg>
<div class="a" style="left:1304px;top:55px;width:196px;height:25px;background:#252529;"></div>
<svg class="a" style="left:1319px;top:58px;" width="13" height="10" viewBox="0 0 13 10"><rect x="0.6" y="0.6" width="11.8" height="8.8" rx="1.5" fill="none" stroke="#dcdcdc" stroke-width="1.2"/><rect x="3" y="2.5" width="7" height="5" fill="none" stroke="#dcdcdc" stroke-width="0.9"/><path d="M1.5 3h1M1.5 5h1M1.5 7h1M10.5 3h1M10.5 5h1M10.5 7h1" stroke="#dcdcdc" stroke-width="0.7"/></svg>
<div class="t" style="left:1318px;top:70.90px;font-size:5.6px;color:#f0f0f0;font-weight:bold;">Video</div>
<svg class="a" style="left:1350px;top:58px;" width="10" height="10" viewBox="0 0 10 10"><path d="M3 8V1.5l6-1v6" stroke="#55555a" fill="none"/><circle cx="2" cy="8" r="1.8" fill="#55555a"/><circle cx="8" cy="7" r="1.8" fill="#55555a"/></svg>
<div class="t" style="left:1348px;top:70.90px;font-size:5.6px;color:#55555a;font-weight:bold;">Audio</div>
<svg class="a" style="left:1379px;top:58px;" width="11" height="10" viewBox="0 0 11 10"><path d="M1 9.5L7 3.5" stroke="#55555a" stroke-width="1.8"/><path d="M8 0.5v2M9.5 3h1.5" stroke="#55555a"/></svg>
<div class="t" style="left:1377px;top:70.90px;font-size:5.6px;color:#55555a;font-weight:bold;">Effects</div>
<svg class="a" style="left:1410px;top:58px;" width="13" height="10" viewBox="0 0 13 10"><rect x="0.6" y="0.6" width="11.8" height="8.8" fill="none" stroke="#55555a"/><path d="M0.6 0.6L6.5 5L12.4 0.6M0.6 9.4L6.5 5L12.4 9.4" stroke="#55555a" fill="none"/></svg>
<div class="t" style="left:1405px;top:70.90px;font-size:5.6px;color:#55555a;font-weight:bold;">Transition</div>
<svg class="a" style="left:1443px;top:58px;" width="13" height="10" viewBox="0 0 13 10"><rect x="0.6" y="0.6" width="11.8" height="8.8" fill="none" stroke="#55555a"/><path d="M2 7l3-3l3 2l3-3" stroke="#55555a" fill="none"/></svg>
<div class="t" style="left:1442px;top:70.90px;font-size:5.6px;color:#55555a;font-weight:bold;">Image</div>
<svg class="a" style="left:1473px;top:58px;" width="12" height="10" viewBox="0 0 12 10"><path d="M1 2h6v7H1z M7 4l4-2v7l-4-1" stroke="#a0a0a4" fill="none" stroke-width="1"/></svg>
<div class="t" style="left:1474px;top:70.90px;font-size:5.6px;color:#e0e0e0;font-weight:bold;">File</div>
<div class="a" style="left:1310px;top:77.6px;width:31px;height:1.4px;background:#d8473f;"></div>
<div class="a" style="left:1304px;top:79.5px;width:191px;height:1px;background:#222226;"></div>
<div class="a" style="left:1311px;top:83.0px;width:12px;height:7px;border-radius:3.5px;background:#1c1c1f"></div>
<div class="a" style="left:1316px;top:84.0px;width:5px;height:5px;border-radius:2.5px;background:#e0554a"></div>
<div class="t" style="left:1327px;top:83.50px;font-size:6px;color:#f0f0f0;font-weight:bold;">Transform</div>
<svg class="a" style="left:1470.5px;top:83.5px;" width="6" height="6" viewBox="0 0 6 6"><path d="M3 0.5L5.5 3L3 5.5L0.5 3z" fill="#c8c8cc"/></svg>
<svg class="a" style="left:1484px;top:82.5px;" width="8" height="8" viewBox="0 0 8 8"><path d="M1.8 2.2A3.2 3.2 0 1 1 1 4.3" stroke="#6e6e73" fill="none" stroke-width="0.9"/><path d="M0.5 0.8v2.2h2.2" stroke="#6e6e73" fill="none" stroke-width="0.9"/><circle cx="4" cy="4" r="0.8" fill="#6e6e73"/></svg>
<div class="t" style="left:1285px;top:98.30px;width:80px;text-align:right;font-size:5.4px;color:#a8a8ac">Zoom</div>
<svg class="a" style="left:1470.5px;top:98px;" width="6" height="6" viewBox="0 0 6 6"><path d="M3 0.5L5.5 3L3 5.5L0.5 3z" fill="#c8c8cc"/></svg>
<svg class="a" style="left:1484px;top:97px;" width="8" height="8" viewBox="0 0 8 8"><path d="M1.8 2.2A3.2 3.2 0 1 1 1 4.3" stroke="#6e6e73" fill="none" stroke-width="0.9"/><path d="M0.5 0.8v2.2h2.2" stroke="#6e6e73" fill="none" stroke-width="0.9"/><circle cx="4" cy="4" r="0.8" fill="#6e6e73"/></svg>
<div class="t" style="left:1285px;top:109.80px;width:80px;text-align:right;font-size:5.4px;color:#a8a8ac">Position</div>
<svg class="a" style="left:1470.5px;top:109.5px;" width="6" height="6" viewBox="0 0 6 6"><path d="M3 0.5L5.5 3L3 5.5L0.5 3z" fill="#c8c8cc"/></svg>
<svg class="a" style="left:1484px;top:108.5px;" width="8" height="8" viewBox="0 0 8 8"><path d="M1.8 2.2A3.2 3.2 0 1 1 1 4.3" stroke="#6e6e73" fill="none" stroke-width="0.9"/><path d="M0.5 0.8v2.2h2.2" stroke="#6e6e73" fill="none" stroke-width="0.9"/><circle cx="4" cy="4" r="0.8" fill="#6e6e73"/></svg>
<div class="t" style="left:1285px;top:121.30px;width:80px;text-align:right;font-size:5.4px;color:#a8a8ac">Rotation Angle</div>
<svg class="a" style="left:1470.5px;top:121px;" width="6" height="6" viewBox="0 0 6 6"><path d="M3 0.5L5.5 3L3 5.5L0.5 3z" fill="#c8c8cc"/></svg>
<svg class="a" style="left:1484px;top:120px;" width="8" height="8" viewBox="0 0 8 8"><path d="M1.8 2.2A3.2 3.2 0 1 1 1 4.3" stroke="#6e6e73" fill="none" stroke-width="0.9"/><path d="M0.5 0.8v2.2h2.2" stroke="#6e6e73" fill="none" stroke-width="0.9"/><circle cx="4" cy="4" r="0.8" fill="#6e6e73"/></svg>
<div class="t" style="left:1285px;top:133.30px;width:80px;text-align:right;font-size:5.4px;color:#a8a8ac">Anchor Point</div>
<svg class="a" style="left:1470.5px;top:133px;" width="6" height="6" viewBox="0 0 6 6"><path d="M3 0.5L5.5 3L3 5.5L0.5 3z" fill="#c8c8cc"/></svg>
<svg class="a" style="left:1484px;top:132px;" width="8" height="8" viewBox="0 0 8 8"><path d="M1.8 2.2A3.2 3.2 0 1 1 1 4.3" stroke="#6e6e73" fill="none" stroke-width="0.9"/><path d="M0.5 0.8v2.2h2.2" stroke="#6e6e73" fill="none" stroke-width="0.9"/><circle cx="4" cy="4" r="0.8" fill="#6e6e73"/></svg>
<div class="t" style="left:1285px;top:145.30px;width:80px;text-align:right;font-size:5.4px;color:#a8a8ac">Pitch</div>
<svg class="a" style="left:1470.5px;top:145px;" width="6" height="6" viewBox="0 0 6 6"><path d="M3 0.5L5.5 3L3 5.5L0.5 3z" fill="#c8c8cc"/></svg>
<svg class="a" style="left:1484px;top:144px;" width="8" height="8" viewBox="0 0 8 8"><path d="M1.8 2.2A3.2 3.2 0 1 1 1 4.3" stroke="#6e6e73" fill="none" stroke-width="0.9"/><path d="M0.5 0.8v2.2h2.2" stroke="#6e6e73" fill="none" stroke-width="0.9"/><circle cx="4" cy="4" r="0.8" fill="#6e6e73"/></svg>
<div class="t" style="left:1285px;top:156.80px;width:80px;text-align:right;font-size:5.4px;color:#a8a8ac">Yaw</div>
<svg class="a" style="left:1470.5px;top:156.5px;" width="6" height="6" viewBox="0 0 6 6"><path d="M3 0.5L5.5 3L3 5.5L0.5 3z" fill="#c8c8cc"/></svg>
<svg class="a" style="left:1484px;top:155.5px;" width="8" height="8" viewBox="0 0 8 8"><path d="M1.8 2.2A3.2 3.2 0 1 1 1 4.3" stroke="#6e6e73" fill="none" stroke-width="0.9"/><path d="M0.5 0.8v2.2h2.2" stroke="#6e6e73" fill="none" stroke-width="0.9"/><circle cx="4" cy="4" r="0.8" fill="#6e6e73"/></svg>
<div class="t" style="left:1285px;top:168.30px;width:80px;text-align:right;font-size:5.4px;color:#a8a8ac">Flip</div>
<svg class="a" style="left:1484px;top:167px;" width="8" height="8" viewBox="0 0 8 8"><path d="M1.8 2.2A3.2 3.2 0 1 1 1 4.3" stroke="#6e6e73" fill="none" stroke-width="0.9"/><path d="M0.5 0.8v2.2h2.2" stroke="#6e6e73" fill="none" stroke-width="0.9"/><circle cx="4" cy="4" r="0.8" fill="#6e6e73"/></svg>
<div class="t" style="left:1370px;top:98.25px;font-size:5.5px;color:#8a8a8e;">X</div>
<div class="a" style="left:1377px;top:96.5px;width:26px;height:9px;background:#1a1a1d;border-radius:1.5px"></div>
<div class="t" style="left:1377px;top:98.4px;width:26px;text-align:center;font-size:5.9px;color:#e8e8e8;font-weight:bold">1.000</div>
<div class="t" style="left:1428px;top:98.25px;font-size:5.5px;color:#8a8a8e;">Y</div>
<div class="a" style="left:1435px;top:96.5px;width:26px;height:9px;background:#1a1a1d;border-radius:1.5px"></div>
<div class="t" style="left:1435px;top:98.4px;width:26px;text-align:center;font-size:5.9px;color:#e8e8e8;font-weight:bold">1.000</div>
<div class="t" style="left:1370px;top:109.75px;font-size:5.5px;color:#8a8a8e;">X</div>
<div class="a" style="left:1377px;top:108.0px;width:26px;height:9px;background:#1a1a1d;border-radius:1.5px"></div>
<div class="t" style="left:1377px;top:109.9px;width:26px;text-align:center;font-size:5.9px;color:#e8e8e8;font-weight:bold">0.000</div>
<div class="t" style="left:1428px;top:109.75px;font-size:5.5px;color:#8a8a8e;">Y</div>
<div class="a" style="left:1435px;top:108.0px;width:26px;height:9px;background:#1a1a1d;border-radius:1.5px"></div>
<div class="t" style="left:1435px;top:109.9px;width:26px;text-align:center;font-size:5.9px;color:#e8e8e8;font-weight:bold">0.000</div>
<div class="t" style="left:1370px;top:133.25px;font-size:5.5px;color:#8a8a8e;">X</div>
<div class="a" style="left:1377px;top:131.5px;width:26px;height:9px;background:#1a1a1d;border-radius:1.5px"></div>
<div class="t" style="left:1377px;top:133.4px;width:26px;text-align:center;font-size:5.9px;color:#e8e8e8;font-weight:bold">0.000</div>
<div class="t" style="left:1428px;top:133.25px;font-size:5.5px;color:#8a8a8e;">Y</div>
<div class="a" style="left:1435px;top:131.5px;width:26px;height:9px;background:#1a1a1d;border-radius:1.5px"></div>
<div class="t" style="left:1435px;top:133.4px;width:26px;text-align:center;font-size:5.9px;color:#e8e8e8;font-weight:bold">0.000</div>
<svg class="a" style="left:1413px;top:97px;" width="8" height="8" viewBox="0 0 8 8"><path d="M3 5L5 3M2.2 4l-1 1a1.3 1.3 0 0 0 1.8 1.8l1-1M5.8 4l1-1a1.3 1.3 0 0 0-1.8-1.8l-1 1" stroke="#e0e0e0" fill="none" stroke-width="1.1"/></svg>
<div class="a" style="left:1370px;top:123.5px;width:62px;height:1px;background:#3c3c41;"></div>
<div class="a" style="left:1398.5px;top:121.5px;width:5px;height:5px;background:#a0a0a4;border-radius:2.5px"></div>
<div class="a" style="left:1435px;top:119.5px;width:26px;height:9px;background:#1a1a1d;border-radius:1.5px"></div>
<div class="t" style="left:1435px;top:121.4px;width:26px;text-align:center;font-size:5.9px;color:#e8e8e8;font-weight:bold">0.000</div>
<div class="a" style="left:1370px;top:147.5px;width:62px;height:1px;background:#3c3c41;"></div>
<div class="a" style="left:1398.5px;top:145.5px;width:5px;height:5px;background:#a0a0a4;border-radius:2.5px"></div>
<div class="a" style="left:1435px;top:143.5px;width:26px;height:9px;background:#1a1a1d;border-radius:1.5px"></div>
<div class="t" style="left:1435px;top:145.4px;width:26px;text-align:center;font-size:5.9px;color:#e8e8e8;font-weight:bold">0.000</div>
<div class="a" style="left:1370px;top:159.0px;width:62px;height:1px;background:#3c3c41;"></div>
<div class="a" style="left:1398.5px;top:157.0px;width:5px;height:5px;background:#a0a0a4;border-radius:2.5px"></div>
<div class="a" style="left:1435px;top:155.0px;width:26px;height:9px;background:#1a1a1d;border-radius:1.5px"></div>
<div class="t" style="left:1435px;top:156.9px;width:26px;text-align:center;font-size:5.9px;color:#e8e8e8;font-weight:bold">0.000</div>
<svg class="a" style="left:1371px;top:166px;" width="10" height="10" viewBox="0 0 10 10"><rect x="0.5" y="0.5" width="9" height="9" rx="1" fill="none" stroke="#6a6a6f"/><path d="M5 2v6M2 5h2M6 5h2" stroke="#9a9a9e" stroke-width="0.9"/></svg>
<svg class="a" style="left:1389px;top:166px;" width="10" height="10" viewBox="0 0 10 10"><rect x="0.5" y="0.5" width="9" height="9" rx="1" fill="none" stroke="#6a6a6f"/><path d="M2 5h6M5 2v2M5 6v2" stroke="#9a9a9e" stroke-width="0.9"/></svg>
<div class="a" style="left:1304px;top:180.5px;width:191px;height:1px;background:#222226;"></div>
<div class="a" style="left:1304px;top:194.5px;width:191px;height:1px;background:#222226;"></div>
<div class="a" style="left:1304px;top:209px;width:191px;height:1px;background:#222226;"></div>
<div class="a" style="left:1304px;top:251px;width:191px;height:1px;background:#222226;"></div>
<div class="a" style="left:1304px;top:266px;width:191px;height:1px;background:#222226;"></div>
<div class="a" style="left:1304px;top:280.5px;width:191px;height:1px;background:#222226;"></div>
<div class="a" style="left:1304px;top:295px;width:191px;height:1px;background:#222226;"></div>
<div class="a" style="left:1304px;top:310px;width:191px;height:1px;background:#222226;"></div>
<div class="a" style="left:1304px;top:324.6px;width:191px;height:1px;background:#222226;"></div>
<div class="a" style="left:1311px;top:184.0px;width:12px;height:7px;border-radius:3.5px;background:#1c1c1f"></div>
<div class="a" style="left:1316px;top:185.0px;width:5px;height:5px;border-radius:2.5px;background:#e0554a"></div>
<div class="t" style="left:1327px;top:184.50px;font-size:6px;color:#f0f0f0;font-weight:bold;">Cropping</div>
<svg class="a" style="left:1470.5px;top:184.5px;" width="6" height="6" viewBox="0 0 6 6"><path d="M3 0.5L5.5 3L3 5.5L0.5 3z" fill="#c8c8cc"/></svg>
<svg class="a" style="left:1484px;top:183.5px;" width="8" height="8" viewBox="0 0 8 8"><path d="M1.8 2.2A3.2 3.2 0 1 1 1 4.3" stroke="#6e6e73" fill="none" stroke-width="0.9"/><path d="M0.5 0.8v2.2h2.2" stroke="#6e6e73" fill="none" stroke-width="0.9"/><circle cx="4" cy="4" r="0.8" fill="#6e6e73"/></svg>
<div class="a" style="left:1311px;top:198.5px;width:12px;height:7px;border-radius:3.5px;background:#1c1c1f"></div>
<div class="a" style="left:1312.5px;top:199.5px;width:5px;height:5px;border-radius:2.5px;background:#8a8a8e"></div>
<div class="t" style="left:1327px;top:199.00px;font-size:6px;color:#f0f0f0;font-weight:bold;">Dynamic Zoom</div>
<svg class="a" style="left:1484px;top:198px;" width="8" height="8" viewBox="0 0 8 8"><path d="M1.8 2.2A3.2 3.2 0 1 1 1 4.3" stroke="#4a4a4f" fill="none" stroke-width="0.9"/><path d="M0.5 0.8v2.2h2.2" stroke="#4a4a4f" fill="none" stroke-width="0.9"/><circle cx="4" cy="4" r="0.8" fill="#4a4a4f"/></svg>
<div class="a" style="left:1311px;top:213.5px;width:12px;height:7px;border-radius:3.5px;background:#1c1c1f"></div>
<div class="a" style="left:1316px;top:214.5px;width:5px;height:5px;border-radius:2.5px;background:#e0554a"></div>
<div class="t" style="left:1327px;top:214.00px;font-size:6px;color:#f0f0f0;font-weight:bold;">Composite</div>
<svg class="a" style="left:1470.5px;top:214px;" width="6" height="6" viewBox="0 0 6 6"><path d="M3 0.5L5.5 3L3 5.5L0.5 3z" fill="#c8c8cc"/></svg>
<svg class="a" style="left:1484px;top:213px;" width="8" height="8" viewBox="0 0 8 8"><path d="M1.8 2.2A3.2 3.2 0 1 1 1 4.3" stroke="#6e6e73" fill="none" stroke-width="0.9"/><path d="M0.5 0.8v2.2h2.2" stroke="#6e6e73" fill="none" stroke-width="0.9"/><circle cx="4" cy="4" r="0.8" fill="#6e6e73"/></svg>
<div class="t" style="left:1285px;top:228.40px;width:80px;text-align:right;font-size:5.2px;color:#a8a8ac">Composite Mode</div>
<div class="a" style="left:1369px;top:226.5px;width:92px;height:9px;background:#1e1e21;border-radius:1.5px"></div>
<div class="t" style="left:1374px;top:228.10px;font-size:5.8px;color:#e0e0e0;">Normal</div>
<svg class="a" style="left:1451px;top:229.5px;" width="5" height="4" viewBox="0 0 5 4"><path d="M0.5 0.8L2.5 3.2L4.5 0.8" stroke="#8a8a8e" fill="none" stroke-width="1"/></svg>
<svg class="a" style="left:1484px;top:227px;" width="8" height="8" viewBox="0 0 8 8"><path d="M1.8 2.2A3.2 3.2 0 1 1 1 4.3" stroke="#6e6e73" fill="none" stroke-width="0.9"/><path d="M0.5 0.8v2.2h2.2" stroke="#6e6e73" fill="none" stroke-width="0.9"/><circle cx="4" cy="4" r="0.8" fill="#6e6e73"/></svg>
<div class="t" style="left:1285px;top:240.40px;width:80px;text-align:right;font-size:5.2px;color:#a8a8ac">Opacity</div>
<div class="a" style="left:1370px;top:242.5px;width:62px;height:1px;background:#3c3c41;"></div>
<div class="a" style="left:1428.5px;top:240.5px;width:5px;height:5px;background:#a0a0a4;border-radius:2.5px"></div>
<div class="a" style="left:1435px;top:238.5px;width:26px;height:9px;background:#1a1a1d;border-radius:1.5px"></div>
<div class="t" style="left:1435px;top:240.4px;width:26px;text-align:center;font-size:5.9px;color:#e8e8e8;font-weight:bold">100.00</div>
<svg class="a" style="left:1470.5px;top:240px;" width="6" height="6" viewBox="0 0 6 6"><path d="M3 0.5L5.5 3L3 5.5L0.5 3z" fill="#c8c8cc"/></svg>
<svg class="a" style="left:1484px;top:239px;" width="8" height="8" viewBox="0 0 8 8"><path d="M1.8 2.2A3.2 3.2 0 1 1 1 4.3" stroke="#6e6e73" fill="none" stroke-width="0.9"/><path d="M0.5 0.8v2.2h2.2" stroke="#6e6e73" fill="none" stroke-width="0.9"/><circle cx="4" cy="4" r="0.8" fill="#6e6e73"/></svg>
<div class="a" style="left:1311px;top:255.5px;width:12px;height:7px;border-radius:3.5px;background:#1c1c1f"></div>
<div class="a" style="left:1316px;top:256.5px;width:5px;height:5px;border-radius:2.5px;background:#6a3a3a"></div>
<div class="t" style="left:1327px;top:256.00px;font-size:6px;color:#f0f0f0;font-weight:bold;">Speed Change</div>
<svg class="a" style="left:1484px;top:255px;" width="8" height="8" viewBox="0 0 8 8"><path d="M1.8 2.2A3.2 3.2 0 1 1 1 4.3" stroke="#6e6e73" fill="none" stroke-width="0.9"/><path d="M0.5 0.8v2.2h2.2" stroke="#6e6e73" fill="none" stroke-width="0.9"/><circle cx="4" cy="4" r="0.8" fill="#6e6e73"/></svg>
<div class="a" style="left:1311px;top:270.0px;width:12px;height:7px;border-radius:3.5px;background:#1c1c1f"></div>
<div class="a" style="left:1316px;top:271.0px;width:5px;height:5px;border-radius:2.5px;background:#e0554a"></div>
<div class="t" style="left:1327px;top:270.50px;font-size:6px;color:#f0f0f0;font-weight:bold;">Stabilization</div>
<svg class="a" style="left:1484px;top:269.5px;" width="8" height="8" viewBox="0 0 8 8"><path d="M1.8 2.2A3.2 3.2 0 1 1 1 4.3" stroke="#6e6e73" fill="none" stroke-width="0.9"/><path d="M0.5 0.8v2.2h2.2" stroke="#6e6e73" fill="none" stroke-width="0.9"/><circle cx="4" cy="4" r="0.8" fill="#6e6e73"/></svg>
<div class="a" style="left:1311px;top:284.5px;width:12px;height:7px;border-radius:3.5px;background:#1c1c1f"></div>
<div class="a" style="left:1316px;top:285.5px;width:5px;height:5px;border-radius:2.5px;background:#e0554a"></div>
<div class="t" style="left:1327px;top:285.00px;font-size:6px;color:#f0f0f0;font-weight:bold;">Lens Correction</div>
<svg class="a" style="left:1470.5px;top:285px;" width="6" height="6" viewBox="0 0 6 6"><path d="M3 0.5L5.5 3L3 5.5L0.5 3z" fill="#c8c8cc"/></svg>
<svg class="a" style="left:1484px;top:284px;" width="8" height="8" viewBox="0 0 8 8"><path d="M1.8 2.2A3.2 3.2 0 1 1 1 4.3" stroke="#6e6e73" fill="none" stroke-width="0.9"/><path d="M0.5 0.8v2.2h2.2" stroke="#6e6e73" fill="none" stroke-width="0.9"/><circle cx="4" cy="4" r="0.8" fill="#6e6e73"/></svg>
<div class="a" style="left:1311px;top:299.0px;width:12px;height:7px;border-radius:3.5px;background:#1c1c1f"></div>
<div class="a" style="left:1316px;top:300.0px;width:5px;height:5px;border-radius:2.5px;background:#e0554a"></div>
<div class="t" style="left:1327px;top:299.50px;font-size:6px;color:#f0f0f0;font-weight:bold;">Retime and Scaling</div>
<svg class="a" style="left:1484px;top:298.5px;" width="8" height="8" viewBox="0 0 8 8"><path d="M1.8 2.2A3.2 3.2 0 1 1 1 4.3" stroke="#6e6e73" fill="none" stroke-width="0.9"/><path d="M0.5 0.8v2.2h2.2" stroke="#6e6e73" fill="none" stroke-width="0.9"/><circle cx="4" cy="4" r="0.8" fill="#6e6e73"/></svg>
<div class="a" style="left:1311px;top:314.0px;width:12px;height:7px;border-radius:3.5px;background:#1c1c1f"></div>
<div class="a" style="left:1312.5px;top:315.0px;width:5px;height:5px;border-radius:2.5px;background:#8a8a8e"></div>
<div class="t" style="left:1327px;top:314.50px;font-size:6px;color:#f0f0f0;font-weight:bold;">Super Scale</div>
<svg class="a" style="left:1484px;top:313.5px;" width="8" height="8" viewBox="0 0 8 8"><path d="M1.8 2.2A3.2 3.2 0 1 1 1 4.3" stroke="#6e6e73" fill="none" stroke-width="0.9"/><path d="M0.5 0.8v2.2h2.2" stroke="#6e6e73" fill="none" stroke-width="0.9"/><circle cx="4" cy="4" r="0.8" fill="#6e6e73"/></svg>
<div class="a" style="left:0px;top:360px;width:315px;height:15px;background:#1f1f23;"></div>
<svg class="a" style="left:4px;top:363px;" width="10" height="9" viewBox="0 0 10 9"><rect x="0.5" y="0.5" width="9" height="8" rx="1.5" fill="none" stroke="#d8d8d8" stroke-width="1"/><rect x="1" y="1" width="4" height="7" fill="#d8d8d8"/></svg>
<svg class="a" style="left:279px;top:363px;" width="9" height="9" viewBox="0 0 9 9"><circle cx="3.8" cy="3.8" r="2.8" stroke="#b0b0b4" fill="none" stroke-width="1.1"/><path d="M6 6l2.5 2.5" stroke="#b0b0b4" stroke-width="1.2"/></svg>
<div class="a" style="left:293px;top:361px;width:1px;height:13px;background:#2a2a2e;"></div>
<svg class="a" style="left:296.5px;top:365.5px;" width="11" height="4" viewBox="0 0 11 4"><circle cx="1.4" cy="1.9" r="1.1" fill="#9a9a9e"/><circle cx="4.7" cy="1.9" r="1.1" fill="#9a9a9e"/><circle cx="8" cy="1.9" r="1.1" fill="#9a9a9e"/></svg>
<div class="a" style="left:0px;top:375px;width:95px;height:306px;background:#28282d;"></div>
<div class="a" style="left:95px;top:375px;width:215px;height:306px;background:#28282d;"></div>
<div class="a" style="left:94px;top:375px;width:1px;height:306px;background:#222226;"></div>
<div class="a" style="left:0px;top:477px;width:94px;height:12.5px;background:#1d1d20;"></div>
<svg class="a" style="left:4px;top:380.5px;" width="5" height="4" viewBox="0 0 5 4"><path d="M0.5 0.8L2.5 2.8L4.5 0.8" stroke="#b4b4b8" fill="none" stroke-width="0.9"/></svg>
<div class="t" style="left:13px;top:378.80px;font-size:6.4px;color:#b4b4b8;">Toolbox</div>
<div class="t" style="left:19px;top:391.40px;font-size:6.4px;color:#a4a4a8;">Video Transitions</div>
<div class="t" style="left:19px;top:404.10px;font-size:6.4px;color:#a4a4a8;">Audio Transitions</div>
<div class="t" style="left:19px;top:416.80px;font-size:6.4px;color:#a4a4a8;">Titles</div>
<div class="t" style="left:19px;top:429.40px;font-size:6.4px;color:#a4a4a8;">Generators</div>
<div class="t" style="left:19px;top:442.00px;font-size:6.4px;color:#a4a4a8;">Effects</div>
<svg class="a" style="left:4px;top:456.5px;" width="5" height="4" viewBox="0 0 5 4"><path d="M0.5 0.8L2.5 2.8L4.5 0.8" stroke="#b4b4b8" fill="none" stroke-width="0.9"/></svg>
<div class="t" style="left:13px;top:454.80px;font-size:6.4px;color:#b4b4b8;">Open FX</div>
<svg class="a" style="left:12px;top:468.6px;" width="4" height="5" viewBox="0 0 4 5"><path d="M0.8 0.5L3 2.5L0.8 4.5" stroke="#8a8a8e" fill="none" stroke-width="0.9"/></svg>
<div class="t" style="left:19px;top:467.40px;font-size:6.4px;color:#a4a4a8;">Filters</div>
<svg class="a" style="left:4px;top:481.8px;" width="5" height="4" viewBox="0 0 5 4"><path d="M0.5 0.8L2.5 2.8L4.5 0.8" stroke="#f4f4f4" fill="none" stroke-width="1.2"/></svg>
<div class="t" style="left:13px;top:480.35px;font-size:5.9px;color:#f4f4f4;font-weight:bold;">Audio FX</div>
<div class="t" style="left:19px;top:492.80px;font-size:6.4px;color:#a4a4a8;">Fairlight FX</div>
<div class="a" style="left:0px;top:621px;width:94px;height:1px;background:#3a3a3f;"></div>
<div class="t" style="left:3px;top:627.00px;font-size:6.0px;color:#f0f0f0;font-weight:bold;">Favorites</div>
<div class="t" style="left:100px;top:380.20px;font-size:6.0px;color:#b8b8bc;font-weight:bold;">Fairlight FX</div>
<svg class="a" style="left:295px;top:380px;" width="6" height="4" viewBox="0 0 6 4"><path d="M0.5 3.2L3 0.8L5.5 3.2" stroke="#a0a0a4" fill="none" stroke-width="1"/></svg>
<div class="a" style="left:100px;top:388.6px;width:199px;height:1px;background:#38383d;"></div>
<div class="a" style="left:100px;top:393.6px;width:199px;height:14px;background:#2e2e33;border:1px solid #1e1e22;border-radius:2px"></div>
<div class="a" style="left:101px;top:394.6px;width:24px;height:12px;background:#333338;"></div>
<div class="a" style="left:125px;top:394.6px;width:1px;height:12px;background:#232327;"></div>
<div class="t" style="left:132px;top:397.90px;font-size:5.4px;color:#a8a8ac;">Chorus</div>
<svg class="a" style="left:104px;top:395.6px;" width="17" height="10" viewBox="0 0 17 10"><circle cx="8.5" cy="3" r="1.6" fill="#88888c"/><circle cx="4.5" cy="4" r="1.3" fill="#88888c"/><circle cx="12.5" cy="4" r="1.3" fill="#88888c"/><path d="M2 9q2.5-4 5-0M6 9q2.5-5 5 0M10 9q2.5-4 5 0" fill="#88888c"/></svg>
<div class="a" style="left:100px;top:411.0px;width:199px;height:14px;background:#2e2e33;border:1px solid #1e1e22;border-radius:2px"></div>
<div class="a" style="left:101px;top:412.0px;width:24px;height:12px;background:#333338;"></div>
<div class="a" style="left:125px;top:412.0px;width:1px;height:12px;background:#232327;"></div>
<div class="t" style="left:132px;top:415.30px;font-size:5.4px;color:#a8a8ac;">De-Esser</div>
<svg class="a" style="left:104px;top:413.0px;" width="17" height="10" viewBox="0 0 17 10"><text x="1" y="9" font-size="10" font-weight="bold" fill="#88888c" font-family="Liberation Sans">S</text><text x="9" y="9" font-size="7" fill="#5c5c60" font-family="Liberation Sans">S</text></svg>
<div class="a" style="left:100px;top:428.4px;width:199px;height:14px;background:#2e2e33;border:1px solid #1e1e22;border-radius:2px"></div>
<div class="a" style="left:101px;top:429.40000000000003px;width:24px;height:12px;background:#333338;"></div>
<div class="a" style="left:125px;top:429.40000000000003px;width:1px;height:12px;background:#232327;"></div>
<div class="t" style="left:132px;top:432.70px;font-size:5.4px;color:#a8a8ac;">De-Hummer</div>
<svg class="a" style="left:104px;top:430.40000000000003px;" width="17" height="10" viewBox="0 0 17 10"><text x="0" y="9" font-size="9.5" font-weight="bold" fill="#88888c" font-family="Liberation Sans">M</text><text x="9" y="9" font-size="7" fill="#5c5c60" font-family="Liberation Sans">M</text></svg>
<div class="a" style="left:100px;top:445.8px;width:199px;height:14px;background:#2e2e33;border:1px solid #1e1e22;border-radius:2px"></div>
<div class="a" style="left:101px;top:446.8px;width:24px;height:12px;background:#333338;"></div>
<div class="a" style="left:125px;top:446.8px;width:1px;height:12px;background:#232327;"></div>
<div class="t" style="left:132px;top:450.10px;font-size:5.4px;color:#a8a8ac;">Delay</div>
<svg class="a" style="left:104px;top:447.8px;" width="17" height="10" viewBox="0 0 17 10"><path d="M6 1h6M6 9h6M6.5 1q0 4 2.5 4q2.5 0 2.5-4M6.5 9q0-4 2.5-4q2.5 0 2.5 4" stroke="#88888c" fill="none" stroke-width="1"/></svg>
<div class="a" style="left:100px;top:463.2px;width:199px;height:14px;background:#2e2e33;border:1px solid #1e1e22;border-radius:2px"></div>
<div class="a" style="left:101px;top:464.20000000000005px;width:24px;height:12px;background:#333338;"></div>
<div class="a" style="left:125px;top:464.20000000000005px;width:1px;height:12px;background:#232327;"></div>
<div class="t" style="left:132px;top:467.50px;font-size:5.4px;color:#a8a8ac;">Dialogue Processor</div>
<svg class="a" style="left:104px;top:465.20000000000005px;" width="17" height="10" viewBox="0 0 17 10"><ellipse cx="8.5" cy="4.5" rx="5" ry="3.8" stroke="#88888c" fill="none" stroke-width="1"/><path d="M6 4.5h5" stroke="#88888c"/></svg>
<div class="a" style="left:100px;top:480.6px;width:199px;height:14px;background:#2e2e33;border:1px solid #1e1e22;border-radius:2px"></div>
<div class="a" style="left:101px;top:481.6px;width:24px;height:12px;background:#333338;"></div>
<div class="a" style="left:125px;top:481.6px;width:1px;height:12px;background:#232327;"></div>
<div class="t" style="left:132px;top:484.90px;font-size:5.4px;color:#a8a8ac;">Distortion</div>
<svg class="a" style="left:104px;top:482.6px;" width="17" height="10" viewBox="0 0 17 10"><path d="M2 9L4 2L6 9L8 2L10 9L12 2L14 9" stroke="#88888c" fill="none" stroke-width="1"/></svg>
<div class="a" style="left:100px;top:498.0px;width:199px;height:14px;background:#2e2e33;border:1px solid #1e1e22;border-radius:2px"></div>
<div class="a" style="left:101px;top:499.0px;width:24px;height:12px;background:#333338;"></div>
<div class="a" style="left:125px;top:499.0px;width:1px;height:12px;background:#232327;"></div>
<div class="t" style="left:132px;top:502.30px;font-size:5.4px;color:#a8a8ac;">Echo</div>
<svg class="a" style="left:104px;top:500.0px;" width="17" height="10" viewBox="0 0 17 10"><path d="M2 9L6 3L10 9M7 9L10 5L13 9" stroke="#88888c" fill="none" stroke-width="1"/><circle cx="3" cy="2" r="1" fill="#88888c"/></svg>
<div class="a" style="left:100px;top:515.4px;width:199px;height:14px;background:#2e2e33;border:1px solid #1e1e22;border-radius:2px"></div>
<div class="a" style="left:101px;top:516.4px;width:24px;height:12px;background:#333338;"></div>
<div class="a" style="left:125px;top:516.4px;width:1px;height:12px;background:#232327;"></div>
<div class="t" style="left:132px;top:519.70px;font-size:5.4px;color:#a8a8ac;">Flanger</div>
<svg class="a" style="left:104px;top:517.4px;" width="17" height="10" viewBox="0 0 17 10"><path d="M2 8V4q1-3 2 0v4M5 8V4q1-3 2 0v4M8 8V4q1-3 2 0v4M11 8V4q1-3 2 0v4M2 9.3h12" stroke="#88888c" fill="none" stroke-width="0.9"/></svg>
<div class="a" style="left:100px;top:532.8px;width:199px;height:14px;background:#2e2e33;border:1px solid #1e1e22;border-radius:2px"></div>
<div class="a" style="left:101px;top:533.8px;width:24px;height:12px;background:#333338;"></div>
<div class="a" style="left:125px;top:533.8px;width:1px;height:12px;background:#232327;"></div>
<div class="t" style="left:132px;top:537.10px;font-size:5.4px;color:#a8a8ac;">Foley Sampler</div>
<svg class="a" style="left:104px;top:534.8px;" width="17" height="10" viewBox="0 0 17 10"><rect x="3" y="1" width="11" height="7" fill="none" stroke="#88888c" stroke-width="1"/><path d="M5.5 1v5M8.5 1v5M11.5 1v5" stroke="#88888c"/></svg>
<div class="a" style="left:100px;top:550.2px;width:199px;height:14px;background:#2e2e33;border:1px solid #1e1e22;border-radius:2px"></div>
<div class="a" style="left:101px;top:551.2px;width:24px;height:12px;background:#333338;"></div>
<div class="a" style="left:125px;top:551.2px;width:1px;height:12px;background:#232327;"></div>
<div class="t" style="left:132px;top:554.50px;font-size:5.4px;color:#a8a8ac;">Frequency Analyzer</div>
<svg class="a" style="left:104px;top:552.2px;" width="17" height="10" viewBox="0 0 17 10"><path d="M1 8L3 2L5 8L7 3" stroke="#88888c" fill="none" stroke-width="1"/><circle cx="10.5" cy="5.5" r="2.5" stroke="#88888c" fill="none"/><path d="M12.3 7.3L14.5 9.5" stroke="#88888c" stroke-width="1.2"/></svg>
<div class="a" style="left:100px;top:567.6px;width:199px;height:14px;background:#2e2e33;border:1px solid #1e1e22;border-radius:2px"></div>
<div class="a" style="left:101px;top:568.6px;width:24px;height:12px;background:#333338;"></div>
<div class="a" style="left:125px;top:568.6px;width:1px;height:12px;background:#232327;"></div>
<div class="t" style="left:132px;top:571.90px;font-size:5.4px;color:#a8a8ac;">LFE Filter</div>
<svg class="a" style="left:104px;top:569.6px;" width="17" height="10" viewBox="0 0 17 10"><circle cx="6" cy="4.5" r="3.8" stroke="#88888c" fill="none"/><circle cx="6" cy="4.5" r="1.3" fill="#88888c"/><path d="M10 9V7M12 9V6M14 9V7" stroke="#88888c"/></svg>
<div class="a" style="left:100px;top:585.0px;width:199px;height:14px;background:#2e2e33;border:1px solid #1e1e22;border-radius:2px"></div>
<div class="a" style="left:101px;top:586.0px;width:24px;height:12px;background:#333338;"></div>
<div class="a" style="left:125px;top:586.0px;width:1px;height:12px;background:#232327;"></div>
<div class="t" style="left:132px;top:589.30px;font-size:5.4px;color:#a8a8ac;">Limiter</div>
<svg class="a" style="left:104px;top:587.0px;" width="17" height="10" viewBox="0 0 17 10"><path d="M2 9V3h2v6M5 9V3h2v6M8 9V3h2v6M11 9V3h2v6M1 2h14" stroke="#88888c" fill="none" stroke-width="0.9"/></svg>
<div class="a" style="left:100px;top:602.4px;width:199px;height:14px;background:#2e2e33;border:1px solid #1e1e22;border-radius:2px"></div>
<div class="a" style="left:101px;top:603.4px;width:24px;height:12px;background:#333338;"></div>
<div class="a" style="left:125px;top:603.4px;width:1px;height:12px;background:#232327;"></div>
<div class="t" style="left:132px;top:606.70px;font-size:5.4px;color:#a8a8ac;">Loudness Meter</div>
<svg class="a" style="left:104px;top:604.4px;" width="17" height="10" viewBox="0 0 17 10"><path d="M8 8V2l5-1v6" stroke="#88888c" fill="none"/><circle cx="7" cy="8" r="1.6" fill="#88888c"/><circle cx="12" cy="7" r="1.6" fill="#88888c"/><circle cx="3" cy="7" r="0.8" fill="#88888c"/><circle cx="4" cy="4" r="0.7" fill="#88888c"/></svg>
<div class="a" style="left:100px;top:619.8px;width:199px;height:14px;background:#2e2e33;border:1px solid #1e1e22;border-radius:2px"></div>
<div class="a" style="left:101px;top:620.8px;width:24px;height:12px;background:#333338;"></div>
<div class="a" style="left:125px;top:620.8px;width:1px;height:12px;background:#232327;"></div>
<div class="t" style="left:132px;top:624.10px;font-size:5.4px;color:#a8a8ac;">Meter</div>
<svg class="a" style="left:104px;top:621.8px;" width="17" height="10" viewBox="0 0 17 10"><path d="M3 9V6M5 9V4M7 9V3M9 9V5M11 9V4M13 9V6" stroke="#88888c" stroke-width="1.2"/></svg>
<div class="a" style="left:100px;top:637.2px;width:199px;height:14px;background:#2e2e33;border:1px solid #1e1e22;border-radius:2px"></div>
<div class="a" style="left:101px;top:638.2px;width:24px;height:12px;background:#333338;"></div>
<div class="a" style="left:125px;top:638.2px;width:1px;height:12px;background:#232327;"></div>
<div class="t" style="left:132px;top:641.50px;font-size:5.4px;color:#a8a8ac;">Modulation</div>
<svg class="a" style="left:104px;top:639.2px;" width="17" height="10" viewBox="0 0 17 10"><path d="M1 5q2-6 4 0t4 0t4 0" stroke="#88888c" fill="none" stroke-width="1"/></svg>
<div class="a" style="left:100px;top:654.6px;width:199px;height:14px;background:#2e2e33;border:1px solid #1e1e22;border-radius:2px"></div>
<div class="a" style="left:101px;top:655.6px;width:24px;height:12px;background:#333338;"></div>
<div class="a" style="left:125px;top:655.6px;width:1px;height:12px;background:#232327;"></div>
<div class="t" style="left:132px;top:658.90px;font-size:5.4px;color:#a8a8ac;">Monitor</div>
<svg class="a" style="left:104px;top:656.6px;" width="17" height="10" viewBox="0 0 17 10"><path d="M8 8V2l5-1v6" stroke="#88888c" fill="none"/><circle cx="7" cy="8" r="1.6" fill="#88888c"/><circle cx="12" cy="7" r="1.6" fill="#88888c"/><circle cx="3" cy="7" r="0.8" fill="#88888c"/><circle cx="4" cy="4" r="0.7" fill="#88888c"/></svg>
<div class="a" style="left:100px;top:672.0px;width:199px;height:14px;background:#2e2e33;border:1px solid #1e1e22;border-radius:2px"></div>
<div class="a" style="left:101px;top:673.0px;width:24px;height:12px;background:#333338;"></div>
<div class="a" style="left:125px;top:673.0px;width:1px;height:12px;background:#232327;"></div>
<div class="t" style="left:132px;top:676.30px;font-size:5.4px;color:#a8a8ac;">Multiband Compressor</div>
<svg class="a" style="left:104px;top:674.0px;" width="17" height="10" viewBox="0 0 17 10"><path d="M3 9V3M6 9V2M9 9V4M12 9V3" stroke="#88888c" stroke-width="1"/></svg>
<div class="a" style="left:304px;top:375px;width:6px;height:306px;background:#1f1f23;"></div>
<div class="a" style="left:305px;top:376px;width:4px;height:194px;background:#505056;border-radius:2px"></div>
<div class="a" style="left:310px;top:358px;width:1190px;height:24px;background:#1f1f23;"></div>
<div class="a" style="left:310px;top:358px;width:1190px;height:1px;background:#18181b;"></div>
<svg class="a" style="left:318px;top:366px;" width="13" height="9" viewBox="0 0 13 9"><rect x="0.5" y="0.5" width="12" height="8" rx="1.5" fill="#9a9a9e"/><rect x="2" y="2" width="2" height="1.6" fill="#333"/><rect x="5.5" y="2" width="2" height="1.6" fill="#333"/><rect x="9" y="2" width="2" height="1.6" fill="#333"/><rect x="0.5" y="5.3" width="12" height="0.8" fill="#555"/></svg>
<svg class="a" style="left:722px;top:366px;" width="7" height="10" viewBox="0 0 7 10"><path d="M0.8 0.8L6.2 5.2L3.6 5.6L5 8.6L4 9L2.6 6L0.8 7.6z" fill="#e0553a"/></svg>
<svg class="a" style="left:739px;top:366px;" width="11" height="9" viewBox="0 0 11 9"><rect x="2.5" y="1" width="6" height="7" rx="1.5" fill="none" stroke="#8a8a8e"/><path d="M0 4.5h2.5M8.5 4.5H11M5.5 2v5" stroke="#8a8a8e"/></svg>
<svg class="a" style="left:758px;top:365px;" width="11" height="11" viewBox="0 0 11 11"><path d="M5.5 0v11M3 3L1 5.5L3 8M8 3l2 2.5L8 8" stroke="#8a8a8e" fill="none"/></svg>
<svg class="a" style="left:776px;top:367px;" width="12" height="7" viewBox="0 0 12 7"><rect x="0.5" y="0.5" width="11" height="6" rx="1.5" fill="#8a8a8e"/><circle cx="3" cy="3.5" r="1" fill="#2a2a2e"/><circle cx="6" cy="3.5" r="1" fill="#2a2a2e"/><circle cx="9" cy="3.5" r="1" fill="#2a2a2e"/></svg>
<div class="a" style="left:794px;top:364px;width:1px;height:13px;background:#35353a;"></div>
<svg class="a" style="left:800px;top:366px;" width="12" height="10" viewBox="0 0 12 10"><rect x="2" y="0.5" width="8" height="6" rx="1" fill="none" stroke="#8a8a8e"/><path d="M0 4h2M10 4h2M4 9h4" stroke="#8a8a8e"/></svg>
<svg class="a" style="left:818px;top:366px;" width="12" height="10" viewBox="0 0 12 10"><rect x="0.5" y="2" width="8" height="6" rx="1" fill="none" stroke="#8a8a8e"/><path d="M9 1l2 0v3" stroke="#8a8a8e" fill="none"/></svg>
<svg class="a" style="left:837px;top:366px;" width="12" height="10" viewBox="0 0 12 10"><rect x="0.5" y="2" width="6" height="6" rx="1" fill="none" stroke="#8a8a8e"/><rect x="5" y="3" width="6" height="6" rx="1" fill="none" stroke="#8a8a8e"/></svg>
<div class="a" style="left:856px;top:364px;width:1px;height:13px;background:#35353a;"></div>
<svg class="a" style="left:863px;top:365px;" width="10" height="10" viewBox="0 0 10 10"><path d="M2 1v4a3 3 0 0 0 6 0V1" stroke="#e8e8e8" fill="none" stroke-width="2"/></svg>
<svg class="a" style="left:881px;top:365px;" width="11" height="11" viewBox="0 0 11 11"><path d="M4.5 6.5L6.5 4.5M3.3 5.2L2 6.5a1.8 1.8 0 0 0 2.5 2.5l1.3-1.3M7.7 5.8L9 4.5a1.8 1.8 0 0 0-2.5-2.5L5.2 3.3" stroke="#a0a0a4" fill="none" stroke-width="1.2"/></svg>
<svg class="a" style="left:901px;top:366px;" width="8" height="9" viewBox="0 0 8 9"><rect x="0.5" y="3.5" width="7" height="5" rx="1" fill="#8a8a8e"/><path d="M2 3.5V2a2 2 0 0 1 4 0v1.5" stroke="#8a8a8e" fill="none"/></svg>
<div class="a" style="left:918px;top:364px;width:1px;height:13px;background:#35353a;"></div>
<svg class="a" style="left:922px;top:366px;" width="7" height="9" viewBox="0 0 7 9"><path d="M0.5 0.5h6v8L3.5 6.5L0.5 8.5z" fill="#2d7fe0"/></svg>
<svg class="a" style="left:933px;top:369px;" width="5" height="4" viewBox="0 0 5 4"><path d="M0.5 0.8L2.5 3.2L4.5 0.8" stroke="#8a8a8e" fill="none" stroke-width="1"/></svg>
<svg class="a" style="left:943px;top:366px;" width="8" height="9" viewBox="0 0 8 9"><path d="M0.5 0.5h7v5.5L4 8.5L0.5 6z" fill="#2d7fe0"/></svg>
<svg class="a" style="left:954px;top:369px;" width="5" height="4" viewBox="0 0 5 4"><path d="M0.5 0.8L2.5 3.2L4.5 0.8" stroke="#8a8a8e" fill="none" stroke-width="1"/></svg>
<div class="a" style="left:964px;top:364px;width:1px;height:13px;background:#35353a;"></div>
<svg class="a" style="left:970px;top:365px;" width="14" height="11" viewBox="0 0 14 11"><rect x="0.5" y="1" width="9" height="5" fill="none" stroke="#8a8a8e"/><circle cx="9.5" cy="7" r="2.5" fill="none" stroke="#8a8a8e"/><path d="M11.3 8.8L13 10.5" stroke="#8a8a8e"/></svg>
<svg class="a" style="left:989px;top:365px;" width="14" height="11" viewBox="0 0 14 11"><rect x="1" y="1" width="7" height="5" fill="none" stroke="#8a8a8e"/><circle cx="9.5" cy="7" r="2.5" fill="none" stroke="#8a8a8e"/><path d="M11.3 8.8L13 10.5" stroke="#8a8a8e"/></svg>
<svg class="a" style="left:1008px;top:365px;" width="14" height="11" viewBox="0 0 14 11"><rect x="0.5" y="1" width="9" height="5" fill="none" stroke="#c8c8cc"/><circle cx="9.5" cy="7" r="2.5" fill="none" stroke="#e8e8e8" stroke-width="1.2"/><path d="M11.3 8.8L13 10.5" stroke="#e8e8e8" stroke-width="1.2"/></svg>
<div class="a" style="left:1028px;top:370px;width:4px;height:1px;background:#8a8a8e;"></div>
<div class="a" style="left:1040px;top:370px;width:40px;height:1px;background:#3a3a3f;"></div>
<div class="a" style="left:1058.5px;top:367.5px;width:5px;height:5px;background:#b8b8bc;border-radius:2.5px"></div>
<div class="a" style="left:1087px;top:370px;width:5px;height:1px;background:#8a8a8e;"></div>
<div class="a" style="left:1089px;top:368px;width:1px;height:5px;background:#8a8a8e;"></div>
<svg class="a" style="left:1412px;top:365px;" width="10" height="10" viewBox="0 0 10 10"><path d="M0.5 3.5h2l3-2.5v9l-3-2.5h-2z" fill="#e8e8e8"/><path d="M7 3a3 3 0 0 1 0 4.5M8.3 1.8a5 5 0 0 1 0 7" stroke="#e8e8e8" fill="none" stroke-width="0.9"/></svg>
<div class="a" style="left:1426px;top:370px;width:37px;height:1.6px;background:#3fae4a;"></div>
<div class="a" style="left:1461px;top:367.5px;width:5px;height:5px;background:#b8b8bc;border-radius:2.5px"></div>
<div class="a" style="left:1470px;top:366px;width:12px;height:8px;border-radius:2px;background:#7c7c80;font-size:4.5px;color:#2a2a2a;text-align:center;line-height:8px;font-weight:bold">DIM</div>
<div class="a" style="left:1488px;top:365px;width:3px;height:11px;background:#2e2e33;"></div>
<div class="a" style="left:310px;top:382px;width:109px;height:19px;background:#232327;"></div>
<div class="t" style="left:338px;top:387.90px;font-size:11.2px;color:#f2f2f2;font-weight:bold;letter-spacing:-0.75px;">01:01:48:22</div>
<div class="a" style="left:419px;top:382px;width:1076px;height:19px;background:#252529;"></div>
<div class="a" style="left:419.3px;top:383px;width:1px;height:10px;background:#6a6a6f;"></div>
<div class="a" style="left:422.8px;top:384.5px;width:1px;height:2.5px;background:#36363b;"></div>
<div class="a" style="left:426.3px;top:384.5px;width:1px;height:2.5px;background:#36363b;"></div>
<div class="a" style="left:429.9px;top:384.5px;width:1px;height:2.5px;background:#36363b;"></div>
<div class="a" style="left:433.4px;top:384.5px;width:1px;height:2.5px;background:#36363b;"></div>
<div class="a" style="left:436.9px;top:384.5px;width:1px;height:2.5px;background:#36363b;"></div>
<div class="a" style="left:440.4px;top:384.5px;width:1px;height:2.5px;background:#36363b;"></div>
<div class="a" style="left:444.0px;top:384.5px;width:1px;height:2.5px;background:#36363b;"></div>
<div class="a" style="left:447.5px;top:384.5px;width:1px;height:2.5px;background:#36363b;"></div>
<div class="a" style="left:451.0px;top:384.5px;width:1px;height:2.5px;background:#36363b;"></div>
<div class="a" style="left:454.5px;top:384.5px;width:1px;height:2.5px;background:#36363b;"></div>
<div class="a" style="left:458.0px;top:384.5px;width:1px;height:2.5px;background:#36363b;"></div>
<div class="a" style="left:461.6px;top:384.5px;width:1px;height:2.5px;background:#36363b;"></div>
<div class="a" style="left:465.1px;top:384.5px;width:1px;height:2.5px;background:#36363b;"></div>
<div class="a" style="left:468.6px;top:384.5px;width:1px;height:2.5px;background:#36363b;"></div>
<div class="a" style="left:472.1px;top:384.5px;width:1px;height:2.5px;background:#36363b;"></div>
<div class="a" style="left:475.7px;top:383px;width:1px;height:5px;background:#48484d;"></div>
<div class="a" style="left:479.2px;top:384.5px;width:1px;height:2.5px;background:#36363b;"></div>
<div class="a" style="left:482.7px;top:384.5px;width:1px;height:2.5px;background:#36363b;"></div>
<div class="a" style="left:486.2px;top:384.5px;width:1px;height:2.5px;background:#36363b;"></div>
<div class="a" style="left:489.7px;top:384.5px;width:1px;height:2.5px;background:#36363b;"></div>
<div class="a" style="left:493.3px;top:384.5px;width:1px;height:2.5px;background:#36363b;"></div>
<div class="a" style="left:496.8px;top:384.5px;width:1px;height:2.5px;background:#36363b;"></div>
<div class="a" style="left:500.3px;top:384.5px;width:1px;height:2.5px;background:#36363b;"></div>
<div class="a" style="left:503.8px;top:384.5px;width:1px;height:2.5px;background:#36363b;"></div>
<div class="a" style="left:507.3px;top:384.5px;width:1px;height:2.5px;background:#36363b;"></div>
<div class="a" style="left:510.9px;top:384.5px;width:1px;height:2.5px;background:#36363b;"></div>
<div class="a" style="left:514.4px;top:384.5px;width:1px;height:2.5px;background:#36363b;"></div>
<div class="a" style="left:517.9px;top:384.5px;width:1px;height:2.5px;background:#36363b;"></div>
<div class="a" style="left:521.4px;top:384.5px;width:1px;height:2.5px;background:#36363b;"></div>
<div class="a" style="left:525.0px;top:384.5px;width:1px;height:2.5px;background:#36363b;"></div>
<div class="a" style="left:528.5px;top:384.5px;width:1px;height:2.5px;background:#36363b;"></div>
<div class="a" style="left:532.0px;top:383px;width:1px;height:10px;background:#6a6a6f;"></div>
<div class="a" style="left:535.5px;top:384.5px;width:1px;height:2.5px;background:#36363b;"></div>
<div class="a" style="left:539.0px;top:384.5px;width:1px;height:2.5px;background:#36363b;"></div>
<div class="a" style="left:542.6px;top:384.5px;width:1px;height:2.5px;background:#36363b;"></div>
<div class="a" style="left:546.1px;top:384.5px;width:1px;height:2.5px;background:#36363b;"></div>
<div class="a" style="left:549.6px;top:384.5px;width:1px;height:2.5px;background:#36363b;"></div>
<div class="a" style="left:553.1px;top:384.5px;width:1px;height:2.5px;background:#36363b;"></div>
<div class="a" style="left:556.7px;top:384.5px;width:1px;height:2.5px;background:#36363b;"></div>
<div class="a" style="left:560.2px;top:384.5px;width:1px;height:2.5px;background:#36363b;"></div>
<div class="a" style="left:563.7px;top:384.5px;width:1px;height:2.5px;background:#36363b;"></div>
<div class="a" style="left:567.2px;top:384.5px;width:1px;height:2.5px;background:#36363b;"></div>
<div class="a" style="left:570.7px;top:384.5px;width:1px;height:2.5px;background:#36363b;"></div>
<div class="a" style="left:574.3px;top:384.5px;width:1px;height:2.5px;background:#36363b;"></div>
<div class="a" style="left:577.8px;top:384.5px;width:1px;height:2.5px;background:#36363b;"></div>
<div class="a" style="left:581.3px;top:384.5px;width:1px;height:2.5px;background:#36363b;"></div>
<div class="a" style="left:584.8px;top:384.5px;width:1px;height:2.5px;background:#36363b;"></div>
<div class="a" style="left:588.4px;top:383px;width:1px;height:5px;background:#48484d;"></div>
<div class="a" style="left:591.9px;top:384.5px;width:1px;height:2.5px;background:#36363b;"></div>
<div class="a" style="left:595.4px;top:384.5px;width:1px;height:2.5px;background:#36363b;"></div>
<div class="a" style="left:598.9px;top:384.5px;width:1px;height:2.5px;background:#36363b;"></div>
<div class="a" style="left:602.4px;top:384.5px;width:1px;height:2.5px;background:#36363b;"></div>
<div class="a" style="left:606.0px;top:384.5px;width:1px;height:2.5px;background:#36363b;"></div>
<div class="a" style="left:609.5px;top:384.5px;width:1px;height:2.5px;background:#36363b;"></div>
<div class="a" style="left:613.0px;top:384.5px;width:1px;height:2.5px;background:#36363b;"></div>
<div class="a" style="left:616.5px;top:384.5px;width:1px;height:2.5px;background:#36363b;"></div>
<div class="a" style="left:620.0px;top:384.5px;width:1px;height:2.5px;background:#36363b;"></div>
<div class="a" style="left:623.6px;top:384.5px;width:1px;height:2.5px;background:#36363b;"></div>
<div class="a" style="left:627.1px;top:384.5px;width:1px;height:2.5px;background:#36363b;"></div>
<div class="a" style="left:630.6px;top:384.5px;width:1px;height:2.5px;background:#36363b;"></div>
<div class="a" style="left:634.1px;top:384.5px;width:1px;height:2.5px;background:#36363b;"></div>
<div class="a" style="left:637.7px;top:384.5px;width:1px;height:2.5px;background:#36363b;"></div>
<div class="a" style="left:641.2px;top:384.5px;width:1px;height:2.5px;background:#36363b;"></div>
<div class="a" style="left:644.7px;top:383px;width:1px;height:10px;background:#6a6a6f;"></div>
<div class="a" style="left:648.2px;top:384.5px;width:1px;height:2.5px;background:#36363b;"></div>
<div class="a" style="left:651.7px;top:384.5px;width:1px;height:2.5px;background:#36363b;"></div>
<div class="a" style="left:655.3px;top:384.5px;width:1px;height:2.5px;background:#36363b;"></div>
<div class="a" style="left:658.8px;top:384.5px;width:1px;height:2.5px;background:#36363b;"></div>
<div class="a" style="left:662.3px;top:384.5px;width:1px;height:2.5px;background:#36363b;"></div>
<div class="a" style="left:665.8px;top:384.5px;width:1px;height:2.5px;background:#36363b;"></div>
<div class="a" style="left:669.4px;top:384.5px;width:1px;height:2.5px;background:#36363b;"></div>
<div class="a" style="left:672.9px;top:384.5px;width:1px;height:2.5px;background:#36363b;"></div>
<div class="a" style="left:676.4px;top:384.5px;width:1px;height:2.5px;background:#36363b;"></div>
<div class="a" style="left:679.9px;top:384.5px;width:1px;height:2.5px;background:#36363b;"></div>
<div class="a" style="left:683.4px;top:384.5px;width:1px;height:2.5px;background:#36363b;"></div>
<div class="a" style="left:687.0px;top:384.5px;width:1px;height:2.5px;background:#36363b;"></div>
<div class="a" style="left:690.5px;top:384.5px;width:1px;height:2.5px;background:#36363b;"></div>
<div class="a" style="left:694.0px;top:384.5px;width:1px;height:2.5px;background:#36363b;"></div>
<div class="a" style="left:697.5px;top:384.5px;width:1px;height:2.5px;background:#36363b;"></div>
<div class="a" style="left:701.0px;top:383px;width:1px;height:5px;background:#48484d;"></div>
<div class="a" style="left:704.6px;top:384.5px;width:1px;height:2.5px;background:#36363b;"></div>
<div class="a" style="left:708.1px;top:384.5px;width:1px;height:2.5px;background:#36363b;"></div>
<div class="a" style="left:711.6px;top:384.5px;width:1px;height:2.5px;background:#36363b;"></div>
<div class="a" style="left:715.1px;top:384.5px;width:1px;height:2.5px;background:#36363b;"></div>
<div class="a" style="left:718.7px;top:384.5px;width:1px;height:2.5px;background:#36363b;"></div>
<div class="a" style="left:722.2px;top:384.5px;width:1px;height:2.5px;background:#36363b;"></div>
<div class="a" style="left:725.7px;top:384.5px;width:1px;height:2.5px;background:#36363b;"></div>
<div class="a" style="left:729.2px;top:384.5px;width:1px;height:2.5px;background:#36363b;"></div>
<div class="a" style="left:732.7px;top:384.5px;width:1px;height:2.5px;background:#36363b;"></div>
<div class="a" style="left:736.3px;top:384.5px;width:1px;height:2.5px;background:#36363b;"></div>
<div class="a" style="left:739.8px;top:384.5px;width:1px;height:2.5px;background:#36363b;"></div>
<div class="a" style="left:743.3px;top:384.5px;width:1px;height:2.5px;background:#36363b;"></div>
<div class="a" style="left:746.8px;top:384.5px;width:1px;height:2.5px;background:#36363b;"></div>
<div class="a" style="left:750.4px;top:384.5px;width:1px;height:2.5px;background:#36363b;"></div>
<div class="a" style="left:753.9px;top:384.5px;width:1px;height:2.5px;background:#36363b;"></div>
<div class="a" style="left:757.4px;top:383px;width:1px;height:10px;background:#6a6a6f;"></div>
<div class="a" style="left:760.9px;top:384.5px;width:1px;height:2.5px;background:#36363b;"></div>
<div class="a" style="left:764.4px;top:384.5px;width:1px;height:2.5px;background:#36363b;"></div>
<div class="a" style="left:768.0px;top:384.5px;width:1px;height:2.5px;background:#36363b;"></div>
<div class="a" style="left:771.5px;top:384.5px;width:1px;height:2.5px;background:#36363b;"></div>
<div class="a" style="left:775.0px;top:384.5px;width:1px;height:2.5px;background:#36363b;"></div>
<div class="a" style="left:778.5px;top:384.5px;width:1px;height:2.5px;background:#36363b;"></div>
<div class="a" style="left:782.1px;top:384.5px;width:1px;height:2.5px;background:#36363b;"></div>
<div class="a" style="left:785.6px;top:384.5px;width:1px;height:2.5px;background:#36363b;"></div>
<div class="a" style="left:789.1px;top:384.5px;width:1px;height:2.5px;background:#36363b;"></div>
<div class="a" style="left:792.6px;top:384.5px;width:1px;height:2.5px;background:#36363b;"></div>
<div class="a" style="left:796.1px;top:384.5px;width:1px;height:2.5px;background:#36363b;"></div>
<div class="a" style="left:799.7px;top:384.5px;width:1px;height:2.5px;background:#36363b;"></div>
<div class="a" style="left:803.2px;top:384.5px;width:1px;height:2.5px;background:#36363b;"></div>
<div class="a" style="left:806.7px;top:384.5px;width:1px;height:2.5px;background:#36363b;"></div>
<div class="a" style="left:810.2px;top:384.5px;width:1px;height:2.5px;background:#36363b;"></div>
<div class="a" style="left:813.8px;top:383px;width:1px;height:5px;background:#48484d;"></div>
<div class="a" style="left:817.3px;top:384.5px;width:1px;height:2.5px;background:#36363b;"></div>
<div class="a" style="left:820.8px;top:384.5px;width:1px;height:2.5px;background:#36363b;"></div>
<div class="a" style="left:824.3px;top:384.5px;width:1px;height:2.5px;background:#36363b;"></div>
<div class="a" style="left:827.8px;top:384.5px;width:1px;height:2.5px;background:#36363b;"></div>
<div class="a" style="left:831.4px;top:384.5px;width:1px;height:2.5px;background:#36363b;"></div>
<div class="a" style="left:834.9px;top:384.5px;width:1px;height:2.5px;background:#36363b;"></div>
<div class="a" style="left:838.4px;top:384.5px;width:1px;height:2.5px;background:#36363b;"></div>
<div class="a" style="left:841.9px;top:384.5px;width:1px;height:2.5px;background:#36363b;"></div>
<div class="a" style="left:845.4px;top:384.5px;width:1px;height:2.5px;background:#36363b;"></div>
<div class="a" style="left:849.0px;top:384.5px;width:1px;height:2.5px;background:#36363b;"></div>
<div class="a" style="left:852.5px;top:384.5px;width:1px;height:2.5px;background:#36363b;"></div>
<div class="a" style="left:856.0px;top:384.5px;width:1px;height:2.5px;background:#36363b;"></div>
<div class="a" style="left:859.5px;top:384.5px;width:1px;height:2.5px;background:#36363b;"></div>
<div class="a" style="left:863.1px;top:384.5px;width:1px;height:2.5px;background:#36363b;"></div>
<div class="a" style="left:866.6px;top:384.5px;width:1px;height:2.5px;background:#36363b;"></div>
<div class="a" style="left:870.1px;top:383px;width:1px;height:10px;background:#6a6a6f;"></div>
<div class="a" style="left:873.6px;top:384.5px;width:1px;height:2.5px;background:#36363b;"></div>
<div class="a" style="left:877.1px;top:384.5px;width:1px;height:2.5px;background:#36363b;"></div>
<div class="a" style="left:880.7px;top:384.5px;width:1px;height:2.5px;background:#36363b;"></div>
<div class="a" style="left:884.2px;top:384.5px;width:1px;height:2.5px;background:#36363b;"></div>
<div class="a" style="left:887.7px;top:384.5px;width:1px;height:2.5px;background:#36363b;"></div>
<div class="a" style="left:891.2px;top:384.5px;width:1px;height:2.5px;background:#36363b;"></div>
<div class="a" style="left:894.8px;top:384.5px;width:1px;height:2.5px;background:#36363b;"></div>
<div class="a" style="left:898.3px;top:384.5px;width:1px;height:2.5px;background:#36363b;"></div>
<div class="a" style="left:901.8px;top:384.5px;width:1px;height:2.5px;background:#36363b;"></div>
<div class="a" style="left:905.3px;top:384.5px;width:1px;height:2.5px;background:#36363b;"></div>
<div class="a" style="left:908.8px;top:384.5px;width:1px;height:2.5px;background:#36363b;"></div>
<div class="a" style="left:912.4px;top:384.5px;width:1px;height:2.5px;background:#36363b;"></div>
<div class="a" style="left:915.9px;top:384.5px;width:1px;height:2.5px;background:#36363b;"></div>
<div class="a" style="left:919.4px;top:384.5px;width:1px;height:2.5px;background:#36363b;"></div>
<div class="a" style="left:922.9px;top:384.5px;width:1px;height:2.5px;background:#36363b;"></div>
<div class="a" style="left:926.5px;top:383px;width:1px;height:5px;background:#48484d;"></div>
<div class="a" style="left:930.0px;top:384.5px;width:1px;height:2.5px;background:#36363b;"></div>
<div class="a" style="left:933.5px;top:384.5px;width:1px;height:2.5px;background:#36363b;"></div>
<div class="a" style="left:937.0px;top:384.5px;width:1px;height:2.5px;background:#36363b;"></div>
<div class="a" style="left:940.5px;top:384.5px;width:1px;height:2.5px;background:#36363b;"></div>
<div class="a" style="left:944.1px;top:384.5px;width:1px;height:2.5px;background:#36363b;"></div>
<div class="a" style="left:947.6px;top:384.5px;width:1px;height:2.5px;background:#36363b;"></div>
<div class="a" style="left:951.1px;top:384.5px;width:1px;height:2.5px;background:#36363b;"></div>
<div class="a" style="left:954.6px;top:384.5px;width:1px;height:2.5px;background:#36363b;"></div>
<div class="a" style="left:958.1px;top:384.5px;width:1px;height:2.5px;background:#36363b;"></div>
<div class="a" style="left:961.7px;top:384.5px;width:1px;height:2.5px;background:#36363b;"></div>
<div class="a" style="left:965.2px;top:384.5px;width:1px;height:2.5px;background:#36363b;"></div>
<div class="a" style="left:968.7px;top:384.5px;width:1px;height:2.5px;background:#36363b;"></div>
<div class="a" style="left:972.2px;top:384.5px;width:1px;height:2.5px;background:#36363b;"></div>
<div class="a" style="left:975.8px;top:384.5px;width:1px;height:2.5px;background:#36363b;"></div>
<div class="a" style="left:979.3px;top:384.5px;width:1px;height:2.5px;background:#36363b;"></div>
<div class="a" style="left:982.8px;top:383px;width:1px;height:10px;background:#6a6a6f;"></div>
<div class="a" style="left:986.3px;top:384.5px;width:1px;height:2.5px;background:#36363b;"></div>
<div class="a" style="left:989.8px;top:384.5px;width:1px;height:2.5px;background:#36363b;"></div>
<div class="a" style="left:993.4px;top:384.5px;width:1px;height:2.5px;background:#36363b;"></div>
<div class="a" style="left:996.9px;top:384.5px;width:1px;height:2.5px;background:#36363b;"></div>
<div class="a" style="left:1000.4px;top:384.5px;width:1px;height:2.5px;background:#36363b;"></div>
<div class="a" style="left:1003.9px;top:384.5px;width:1px;height:2.5px;background:#36363b;"></div>
<div class="a" style="left:1007.5px;top:384.5px;width:1px;height:2.5px;background:#36363b;"></div>
<div class="a" style="left:1011.0px;top:384.5px;width:1px;height:2.5px;background:#36363b;"></div>
<div class="a" style="left:1014.5px;top:384.5px;width:1px;height:2.5px;background:#36363b;"></div>
<div class="a" style="left:1018.0px;top:384.5px;width:1px;height:2.5px;background:#36363b;"></div>
<div class="a" style="left:1021.5px;top:384.5px;width:1px;height:2.5px;background:#36363b;"></div>
<div class="a" style="left:1025.1px;top:384.5px;width:1px;height:2.5px;background:#36363b;"></div>
<div class="a" style="left:1028.6px;top:384.5px;width:1px;height:2.5px;background:#36363b;"></div>
<div class="a" style="left:1032.1px;top:384.5px;width:1px;height:2.5px;background:#36363b;"></div>
<div class="a" style="left:1035.6px;top:384.5px;width:1px;height:2.5px;background:#36363b;"></div>
<div class="a" style="left:1039.2px;top:383px;width:1px;height:5px;background:#48484d;"></div>
<div class="a" style="left:1042.7px;top:384.5px;width:1px;height:2.5px;background:#36363b;"></div>
<div class="a" style="left:1046.2px;top:384.5px;width:1px;height:2.5px;background:#36363b;"></div>
<div class="a" style="left:1049.7px;top:384.5px;width:1px;height:2.5px;background:#36363b;"></div>
<div class="a" style="left:1053.2px;top:384.5px;width:1px;height:2.5px;background:#36363b;"></div>
<div class="a" style="left:1056.8px;top:384.5px;width:1px;height:2.5px;background:#36363b;"></div>
<div class="a" style="left:1060.3px;top:384.5px;width:1px;height:2.5px;background:#36363b;"></div>
<div class="a" style="left:1063.8px;top:384.5px;width:1px;height:2.5px;background:#36363b;"></div>
<div class="a" style="left:1067.3px;top:384.5px;width:1px;height:2.5px;background:#36363b;"></div>
<div class="a" style="left:1070.8px;top:384.5px;width:1px;height:2.5px;background:#36363b;"></div>
<div class="a" style="left:1074.4px;top:384.5px;width:1px;height:2.5px;background:#36363b;"></div>
<div class="a" style="left:1077.9px;top:384.5px;width:1px;height:2.5px;background:#36363b;"></div>
<div class="a" style="left:1081.4px;top:384.5px;width:1px;height:2.5px;background:#36363b;"></div>
<div class="a" style="left:1084.9px;top:384.5px;width:1px;height:2.5px;background:#36363b;"></div>
<div class="a" style="left:1088.5px;top:384.5px;width:1px;height:2.5px;background:#36363b;"></div>
<div class="a" style="left:1092.0px;top:384.5px;width:1px;height:2.5px;background:#36363b;"></div>
<div class="a" style="left:1095.5px;top:383px;width:1px;height:10px;background:#6a6a6f;"></div>
<div class="a" style="left:1099.0px;top:384.5px;width:1px;height:2.5px;background:#36363b;"></div>
<div class="a" style="left:1102.5px;top:384.5px;width:1px;height:2.5px;background:#36363b;"></div>
<div class="a" style="left:1106.1px;top:384.5px;width:1px;height:2.5px;background:#36363b;"></div>
<div class="a" style="left:1109.6px;top:384.5px;width:1px;height:2.5px;background:#36363b;"></div>
<div class="a" style="left:1113.1px;top:384.5px;width:1px;height:2.5px;background:#36363b;"></div>
<div class="a" style="left:1116.6px;top:384.5px;width:1px;height:2.5px;background:#36363b;"></div>
<div class="a" style="left:1120.2px;top:384.5px;width:1px;height:2.5px;background:#36363b;"></div>
<div class="a" style="left:1123.7px;top:384.5px;width:1px;height:2.5px;background:#36363b;"></div>
<div class="a" style="left:1127.2px;top:384.5px;width:1px;height:2.5px;background:#36363b;"></div>
<div class="a" style="left:1130.7px;top:384.5px;width:1px;height:2.5px;background:#36363b;"></div>
<div class="a" style="left:1134.2px;top:384.5px;width:1px;height:2.5px;background:#36363b;"></div>
<div class="a" style="left:1137.8px;top:384.5px;width:1px;height:2.5px;background:#36363b;"></div>
<div class="a" style="left:1141.3px;top:384.5px;width:1px;height:2.5px;background:#36363b;"></div>
<div class="a" style="left:1144.8px;top:384.5px;width:1px;height:2.5px;background:#36363b;"></div>
<div class="a" style="left:1148.3px;top:384.5px;width:1px;height:2.5px;background:#36363b;"></div>
<div class="a" style="left:1151.9px;top:383px;width:1px;height:5px;background:#48484d;"></div>
<div class="a" style="left:1155.4px;top:384.5px;width:1px;height:2.5px;background:#36363b;"></div>
<div class="a" style="left:1158.9px;top:384.5px;width:1px;height:2.5px;background:#36363b;"></div>
<div class="a" style="left:1162.4px;top:384.5px;width:1px;height:2.5px;background:#36363b;"></div>
<div class="a" style="left:1165.9px;top:384.5px;width:1px;height:2.5px;background:#36363b;"></div>
<div class="a" style="left:1169.5px;top:384.5px;width:1px;height:2.5px;background:#36363b;"></div>
<div class="a" style="left:1173.0px;top:384.5px;width:1px;height:2.5px;background:#36363b;"></div>
<div class="a" style="left:1176.5px;top:384.5px;width:1px;height:2.5px;background:#36363b;"></div>
<div class="a" style="left:1180.0px;top:384.5px;width:1px;height:2.5px;background:#36363b;"></div>
<div class="a" style="left:1183.5px;top:384.5px;width:1px;height:2.5px;background:#36363b;"></div>
<div class="a" style="left:1187.1px;top:384.5px;width:1px;height:2.5px;background:#36363b;"></div>
<div class="a" style="left:1190.6px;top:384.5px;width:1px;height:2.5px;background:#36363b;"></div>
<div class="a" style="left:1194.1px;top:384.5px;width:1px;height:2.5px;background:#36363b;"></div>
<div class="a" style="left:1197.6px;top:384.5px;width:1px;height:2.5px;background:#36363b;"></div>
<div class="a" style="left:1201.2px;top:384.5px;width:1px;height:2.5px;background:#36363b;"></div>
<div class="a" style="left:1204.7px;top:384.5px;width:1px;height:2.5px;background:#36363b;"></div>
<div class="a" style="left:1208.2px;top:383px;width:1px;height:10px;background:#6a6a6f;"></div>
<div class="a" style="left:1211.7px;top:384.5px;width:1px;height:2.5px;background:#36363b;"></div>
<div class="a" style="left:1215.2px;top:384.5px;width:1px;height:2.5px;background:#36363b;"></div>
<div class="a" style="left:1218.8px;top:384.5px;width:1px;height:2.5px;background:#36363b;"></div>
<div class="a" style="left:1222.3px;top:384.5px;width:1px;height:2.5px;background:#36363b;"></div>
<div class="a" style="left:1225.8px;top:384.5px;width:1px;height:2.5px;background:#36363b;"></div>
<div class="a" style="left:1229.3px;top:384.5px;width:1px;height:2.5px;background:#36363b;"></div>
<div class="a" style="left:1232.9px;top:384.5px;width:1px;height:2.5px;background:#36363b;"></div>
<div class="a" style="left:1236.4px;top:384.5px;width:1px;height:2.5px;background:#36363b;"></div>
<div class="a" style="left:1239.9px;top:384.5px;width:1px;height:2.5px;background:#36363b;"></div>
<div class="a" style="left:1243.4px;top:384.5px;width:1px;height:2.5px;background:#36363b;"></div>
<div class="a" style="left:1246.9px;top:384.5px;width:1px;height:2.5px;background:#36363b;"></div>
<div class="a" style="left:1250.5px;top:384.5px;width:1px;height:2.5px;background:#36363b;"></div>
<div class="a" style="left:1254.0px;top:384.5px;width:1px;height:2.5px;background:#36363b;"></div>
<div class="a" style="left:1257.5px;top:384.5px;width:1px;height:2.5px;background:#36363b;"></div>
<div class="a" style="left:1261.0px;top:384.5px;width:1px;height:2.5px;background:#36363b;"></div>
<div class="a" style="left:1264.5px;top:383px;width:1px;height:5px;background:#48484d;"></div>
<div class="a" style="left:1268.1px;top:384.5px;width:1px;height:2.5px;background:#36363b;"></div>
<div class="a" style="left:1271.6px;top:384.5px;width:1px;height:2.5px;background:#36363b;"></div>
<div class="a" style="left:1275.1px;top:384.5px;width:1px;height:2.5px;background:#36363b;"></div>
<div class="a" style="left:1278.6px;top:384.5px;width:1px;height:2.5px;background:#36363b;"></div>
<div class="a" style="left:1282.2px;top:384.5px;width:1px;height:2.5px;background:#36363b;"></div>
<div class="a" style="left:1285.7px;top:384.5px;width:1px;height:2.5px;background:#36363b;"></div>
<div class="a" style="left:1289.2px;top:384.5px;width:1px;height:2.5px;background:#36363b;"></div>
<div class="a" style="left:1292.7px;top:384.5px;width:1px;height:2.5px;background:#36363b;"></div>
<div class="a" style="left:1296.2px;top:384.5px;width:1px;height:2.5px;background:#36363b;"></div>
<div class="a" style="left:1299.8px;top:384.5px;width:1px;height:2.5px;background:#36363b;"></div>
<div class="a" style="left:1303.3px;top:384.5px;width:1px;height:2.5px;background:#36363b;"></div>
<div class="a" style="left:1306.8px;top:384.5px;width:1px;height:2.5px;background:#36363b;"></div>
<div class="a" style="left:1310.3px;top:384.5px;width:1px;height:2.5px;background:#36363b;"></div>
<div class="a" style="left:1313.9px;top:384.5px;width:1px;height:2.5px;background:#36363b;"></div>
<div class="a" style="left:1317.4px;top:384.5px;width:1px;height:2.5px;background:#36363b;"></div>
<div class="a" style="left:1320.9px;top:383px;width:1px;height:10px;background:#6a6a6f;"></div>
<div class="a" style="left:1324.4px;top:384.5px;width:1px;height:2.5px;background:#36363b;"></div>
<div class="a" style="left:1327.9px;top:384.5px;width:1px;height:2.5px;background:#36363b;"></div>
<div class="a" style="left:1331.5px;top:384.5px;width:1px;height:2.5px;background:#36363b;"></div>
<div class="a" style="left:1335.0px;top:384.5px;width:1px;height:2.5px;background:#36363b;"></div>
<div class="a" style="left:1338.5px;top:384.5px;width:1px;height:2.5px;background:#36363b;"></div>
<div class="a" style="left:1342.0px;top:384.5px;width:1px;height:2.5px;background:#36363b;"></div>
<div class="a" style="left:1345.6px;top:384.5px;width:1px;height:2.5px;background:#36363b;"></div>
<div class="a" style="left:1349.1px;top:384.5px;width:1px;height:2.5px;background:#36363b;"></div>
<div class="a" style="left:1352.6px;top:384.5px;width:1px;height:2.5px;background:#36363b;"></div>
<div class="a" style="left:1356.1px;top:384.5px;width:1px;height:2.5px;background:#36363b;"></div>
<div class="a" style="left:1359.6px;top:384.5px;width:1px;height:2.5px;background:#36363b;"></div>
<div class="a" style="left:1363.2px;top:384.5px;width:1px;height:2.5px;background:#36363b;"></div>
<div class="a" style="left:1366.7px;top:384.5px;width:1px;height:2.5px;background:#36363b;"></div>
<div class="a" style="left:1370.2px;top:384.5px;width:1px;height:2.5px;background:#36363b;"></div>
<div class="a" style="left:1373.7px;top:384.5px;width:1px;height:2.5px;background:#36363b;"></div>
<div class="a" style="left:1377.2px;top:383px;width:1px;height:5px;background:#48484d;"></div>
<div class="a" style="left:1380.8px;top:384.5px;width:1px;height:2.5px;background:#36363b;"></div>
<div class="a" style="left:1384.3px;top:384.5px;width:1px;height:2.5px;background:#36363b;"></div>
<div class="a" style="left:1387.8px;top:384.5px;width:1px;height:2.5px;background:#36363b;"></div>
<div class="a" style="left:1391.3px;top:384.5px;width:1px;height:2.5px;background:#36363b;"></div>
<div class="a" style="left:1394.9px;top:384.5px;width:1px;height:2.5px;background:#36363b;"></div>
<div class="a" style="left:1398.4px;top:384.5px;width:1px;height:2.5px;background:#36363b;"></div>
<div class="a" style="left:1401.9px;top:384.5px;width:1px;height:2.5px;background:#36363b;"></div>
<div class="a" style="left:1405.4px;top:384.5px;width:1px;height:2.5px;background:#36363b;"></div>
<div class="a" style="left:1408.9px;top:384.5px;width:1px;height:2.5px;background:#36363b;"></div>
<div class="a" style="left:1412.5px;top:384.5px;width:1px;height:2.5px;background:#36363b;"></div>
<div class="a" style="left:1416.0px;top:384.5px;width:1px;height:2.5px;background:#36363b;"></div>
<div class="a" style="left:1419.5px;top:384.5px;width:1px;height:2.5px;background:#36363b;"></div>
<div class="a" style="left:1423.0px;top:384.5px;width:1px;height:2.5px;background:#36363b;"></div>
<div class="a" style="left:1426.6px;top:384.5px;width:1px;height:2.5px;background:#36363b;"></div>
<div class="a" style="left:1430.1px;top:384.5px;width:1px;height:2.5px;background:#36363b;"></div>
<div class="a" style="left:1433.6px;top:383px;width:1px;height:10px;background:#6a6a6f;"></div>
<div class="a" style="left:1437.1px;top:384.5px;width:1px;height:2.5px;background:#36363b;"></div>
<div class="a" style="left:1440.6px;top:384.5px;width:1px;height:2.5px;background:#36363b;"></div>
<div class="a" style="left:1444.2px;top:384.5px;width:1px;height:2.5px;background:#36363b;"></div>
<div class="a" style="left:1447.7px;top:384.5px;width:1px;height:2.5px;background:#36363b;"></div>
<div class="a" style="left:1451.2px;top:384.5px;width:1px;height:2.5px;background:#36363b;"></div>
<div class="a" style="left:1454.7px;top:384.5px;width:1px;height:2.5px;background:#36363b;"></div>
<div class="a" style="left:1458.3px;top:384.5px;width:1px;height:2.5px;background:#36363b;"></div>
<div class="a" style="left:1461.8px;top:384.5px;width:1px;height:2.5px;background:#36363b;"></div>
<div class="a" style="left:1465.3px;top:384.5px;width:1px;height:2.5px;background:#36363b;"></div>
<div class="a" style="left:1468.8px;top:384.5px;width:1px;height:2.5px;background:#36363b;"></div>
<div class="a" style="left:1472.3px;top:384.5px;width:1px;height:2.5px;background:#36363b;"></div>
<div class="a" style="left:1475.9px;top:384.5px;width:1px;height:2.5px;background:#36363b;"></div>
<div class="a" style="left:1479.4px;top:384.5px;width:1px;height:2.5px;background:#36363b;"></div>
<div class="a" style="left:1482.9px;top:384.5px;width:1px;height:2.5px;background:#36363b;"></div>
<div class="a" style="left:1486.4px;top:384.5px;width:1px;height:2.5px;background:#36363b;"></div>
<div class="a" style="left:1490.0px;top:383px;width:1px;height:5px;background:#48484d;"></div>
<div class="t" style="left:422.3px;top:390.15px;font-size:5.3px;color:#a0a0a4;">01:00:00:00</div>
<div class="t" style="left:535.0px;top:390.15px;font-size:5.3px;color:#a0a0a4;">01:00:16:00</div>
<div class="t" style="left:647.7px;top:390.15px;font-size:5.3px;color:#a0a0a4;">01:00:32:00</div>
<div class="t" style="left:760.4000000000001px;top:390.15px;font-size:5.3px;color:#a0a0a4;">01:00:48:00</div>
<div class="t" style="left:873.1px;top:390.15px;font-size:5.3px;color:#a0a0a4;">01:01:04:00</div>
<div class="t" style="left:985.8px;top:390.15px;font-size:5.3px;color:#a0a0a4;">01:01:20:00</div>
<div class="t" style="left:1098.5px;top:390.15px;font-size:5.3px;color:#a0a0a4;">01:01:36:00</div>
<div class="t" style="left:1211.2px;top:390.15px;font-size:5.3px;color:#a0a0a4;">01:01:52:00</div>
<div class="t" style="left:1323.9px;top:390.15px;font-size:5.3px;color:#a0a0a4;">01:02:08:00</div>
<div class="t" style="left:1436.6000000000001px;top:390.15px;font-size:5.3px;color:#a0a0a4;">01:02:24:00</div>
<div class="a" style="left:419px;top:401px;width:1076px;height:276px;background:#28282d;"></div>
<div class="a" style="left:532.0px;top:401px;width:1px;height:276px;background:#303035;"></div>
<div class="a" style="left:644.7px;top:401px;width:1px;height:276px;background:#303035;"></div>
<div class="a" style="left:757.4px;top:401px;width:1px;height:276px;background:#303035;"></div>
<div class="a" style="left:870.1px;top:401px;width:1px;height:276px;background:#303035;"></div>
<div class="a" style="left:982.8px;top:401px;width:1px;height:276px;background:#303035;"></div>
<div class="a" style="left:1095.5px;top:401px;width:1px;height:276px;background:#303035;"></div>
<div class="a" style="left:1208.2px;top:401px;width:1px;height:276px;background:#303035;"></div>
<div class="a" style="left:1320.9px;top:401px;width:1px;height:276px;background:#303035;"></div>
<div class="a" style="left:1433.6px;top:401px;width:1px;height:276px;background:#303035;"></div>
<div class="a" style="left:310px;top:401px;width:109px;height:276px;background:#242428;"></div>
<div class="a" style="left:312px;top:401px;width:7.5px;height:276px;background:#1c1c1f;"></div>
<div class="a" style="left:310px;top:401px;width:2px;height:137.5px;background:#3f74ae;"></div>
<div class="a" style="left:310px;top:540px;width:2px;height:137px;background:#4a9a68;"></div>
<div class="a" style="left:312px;top:432px;width:107px;height:1px;background:#1c1c1f;"></div>
<div class="a" style="left:312px;top:485px;width:107px;height:1px;background:#1c1c1f;"></div>
<div class="a" style="left:312px;top:538px;width:1183px;height:2px;background:#1c1c1f;"></div>
<div class="a" style="left:319.5px;top:446px;width:99.5px;height:1px;background:#1f1f23;"></div>
<div class="a" style="left:319.5px;top:498px;width:99.5px;height:1px;background:#1f1f23;"></div>
<div class="a" style="left:319.5px;top:552.5px;width:99.5px;height:1px;background:#1f1f23;"></div>
<div class="a" style="left:418.5px;top:401px;width:1px;height:276px;background:#1c1c1f;"></div>
<div class="t" style="left:326px;top:408.00px;font-size:5.6px;color:#a8a8ac;font-weight:bold;">1 Clip</div>
<div class="t" style="left:326px;top:436.70px;font-size:5.6px;color:#9a9a9e;font-weight:bold;">V2</div>
<div class="a" style="left:340px;top:433px;width:1px;height:13px;background:#1f1f23;"></div>
<div class="t" style="left:344px;top:436.40px;font-size:5.8px;color:#f0f0f0;font-weight:bold;">Video 2</div>
<div class="t" style="left:326px;top:461.00px;font-size:5.6px;color:#a0a0a4;font-weight:bold;">2 Clips</div>
<div class="a" style="left:322px;top:486.5px;width:16px;height:10.5px;border:1px solid #c83c34;border-radius:1px;background:#1a1a1d"></div>
<div class="t" style="left:326px;top:488.90px;font-size:5.8px;color:#f4f4f4;font-weight:bold;">V1</div>
<div class="a" style="left:340px;top:486px;width:1px;height:12px;background:#1f1f23;"></div>
<div class="t" style="left:344px;top:488.80px;font-size:5.8px;color:#f0f0f0;font-weight:bold;">Video 1</div>
<div class="t" style="left:326px;top:514.50px;font-size:5.6px;color:#a0a0a4;font-weight:bold;">8 Clips</div>
<div class="t" style="left:327px;top:543.70px;font-size:5.6px;color:#9a9a9e;font-weight:bold;">A1</div>
<div class="a" style="left:339px;top:540px;width:1px;height:12px;background:#1f1f23;"></div>
<div class="t" style="left:344px;top:543.60px;font-size:5.8px;color:#f0f0f0;font-weight:bold;">Audio 1</div>
<div class="t" style="left:407px;top:543.85px;font-size:5.3px;color:#7a7a7e;">2.0</div>
<div class="t" style="left:326px;top:568.50px;font-size:5.6px;color:#a0a0a4;font-weight:bold;">11 Clips</div>
<svg class="a" style="left:347px;top:448.0px;" width="6" height="7" viewBox="0 0 6 7"><rect x="0.5" y="3" width="5" height="3.5" rx="0.5" fill="#4a4a4f"/><path d="M1.5 3V2a1.5 1.5 0 0 1 3 0v1" stroke="#4a4a4f" fill="none"/></svg>
<div class="a" style="left:358px;top:447.0px;width:10px;height:9px;border-radius:2px;background:#e4e4e4"></div>
<svg class="a" style="left:359px;top:448.5px;" width="8" height="6" viewBox="0 0 8 6"><rect x="1" y="1" width="6" height="4" fill="none" stroke="#2a2a2e" stroke-width="0.9"/><path d="M3.5 1v4" stroke="#2a2a2e" stroke-width="0.7"/></svg>
<div class="a" style="left:371px;top:447.0px;width:10px;height:9px;border-radius:2px;background:#5e5e63"></div>
<svg class="a" style="left:373px;top:449.0px;" width="6" height="5" viewBox="0 0 6 5"><path d="M0 1.2h6M0 3.8h6M3 0v5" stroke="#2e2e33" stroke-width="0.8"/></svg>
<svg class="a" style="left:347px;top:501.1px;" width="6" height="7" viewBox="0 0 6 7"><rect x="0.5" y="3" width="5" height="3.5" rx="0.5" fill="#4a4a4f"/><path d="M1.5 3V2a1.5 1.5 0 0 1 3 0v1" stroke="#4a4a4f" fill="none"/></svg>
<div class="a" style="left:358px;top:500.1px;width:10px;height:9px;border-radius:2px;background:#e4e4e4"></div>
<svg class="a" style="left:359px;top:501.6px;" width="8" height="6" viewBox="0 0 8 6"><rect x="1" y="1" width="6" height="4" fill="none" stroke="#2a2a2e" stroke-width="0.9"/><path d="M3.5 1v4" stroke="#2a2a2e" stroke-width="0.7"/></svg>
<div class="a" style="left:371px;top:500.1px;width:10px;height:9px;border-radius:2px;background:#5e5e63"></div>
<svg class="a" style="left:373px;top:502.1px;" width="6" height="5" viewBox="0 0 6 5"><path d="M0 1.2h6M0 3.8h6M3 0v5" stroke="#2e2e33" stroke-width="0.8"/></svg>
<svg class="a" style="left:347px;top:556.5px;" width="6" height="7" viewBox="0 0 6 7"><rect x="0.5" y="3" width="5" height="3.5" rx="0.5" fill="#4a4a4f"/><path d="M1.5 3V2a1.5 1.5 0 0 1 3 0v1" stroke="#4a4a4f" fill="none"/></svg>
<div class="a" style="left:358px;top:555.5px;width:10px;height:9px;border-radius:2px;background:#e4e4e4"></div>
<svg class="a" style="left:359px;top:557px;" width="8" height="6" viewBox="0 0 8 6"><rect x="1" y="1" width="6" height="4" fill="none" stroke="#2a2a2e" stroke-width="0.9"/><path d="M3.5 1v4" stroke="#2a2a2e" stroke-width="0.7"/></svg>
<div class="a" style="left:372px;top:555.5px;width:9px;height:9px;border-radius:2px;background:#38383d;color:#6a6a6f;font-size:5.5px;text-align:center;line-height:9px;font-weight:bold">S</div>
<div class="a" style="left:385px;top:555.5px;width:9px;height:9px;border-radius:2px;background:#38383d;color:#6a6a6f;font-size:5.5px;text-align:center;line-height:9px;font-weight:bold">M</div>
<div class="a" style="left:418.5px;top:432.5px;width:36.0px;height:53.0px;background:#c8bea6;border-radius:1.5px;border:1px solid #1e1e21"></div>
<div class="a" style="left:419.5px;top:474.0px;width:34.0px;height:10.5px;background:#c2b89f;"></div>
<div class="a" style="left:419.5px;top:474.0px;width:34.0px;height:0.8px;background:#b5ab92;"></div>
<div class="t" style="left:421.5px;top:477.00px;font-size:5.4px;color:#f4f2ec;font-weight:bold;">Flip O...</div>
<svg class="a" style="left:445.5px;top:476.5px;" width="6" height="6" viewBox="0 0 6 6"><path d="M3 0.5v2M3 3.5v2M0.5 3h2M3.5 3h2" stroke="#f4f2ec" stroke-width="0.9"/></svg>
<div class="a" style="left:1319.5px;top:401.5px;width:24.5px;height:31.0px;background:#c8bea6;border-radius:1.5px;border:1px solid #1e1e21"></div>
<div class="a" style="left:1320.5px;top:421.0px;width:22.5px;height:10.5px;background:#c2b89f;"></div>
<div class="a" style="left:1320.5px;top:421.0px;width:22.5px;height:0.8px;background:#b5ab92;"></div>
<div class="t" style="left:1322.5px;top:424.00px;font-size:5.4px;color:#f4f2ec;font-weight:bold;">Horiz...</div>
<div class="a" style="left:1336.5px;top:432.5px;width:36.0px;height:53.0px;background:#c8bea6;border-radius:1.5px;border:1px solid #1e1e21"></div>
<div class="a" style="left:1337.5px;top:474.0px;width:34.0px;height:10.5px;background:#c2b89f;"></div>
<div class="a" style="left:1337.5px;top:474.0px;width:34.0px;height:0.8px;background:#b5ab92;"></div>
<div class="t" style="left:1339.5px;top:477.00px;font-size:5.4px;color:#f4f2ec;font-weight:bold;">Horiz...</div>
<svg class="a" style="left:1363.5px;top:476.5px;" width="6" height="6" viewBox="0 0 6 6"><path d="M3 0.5v2M3 3.5v2M0.5 3h2M3.5 3h2" stroke="#f4f2ec" stroke-width="0.9"/></svg>
<div class="a" style="left:428.5px;top:486.3px;width:143.0px;height:51.7px;background:#2f6aa0;"></div>
<div class="a" style="left:429.7px;top:527px;width:140.6px;height:10.8px;background:#4079ad;"></div>
<svg class="a" style="left:432.0px;top:529.3px;" width="7" height="7" viewBox="0 0 7 7"><path d="M2.8 4.2L4.2 2.8M2 3.3l-0.8 0.8a1.2 1.2 0 0 0 1.7 1.7l0.8-0.8M5 3.7l0.8-0.8a1.2 1.2 0 0 0-1.7-1.7L3.3 2" stroke="#e8eef4" fill="none" stroke-width="0.9"/></svg>
<div class="t" style="left:440.0px;top:530.05px;font-size:5.5px;color:#f2f6fa;font-weight:bold;">IMG_4313_stol.MOV</div>
<div class="a" style="left:572px;top:486.3px;width:87.5px;height:51.7px;background:#2f6aa0;"></div>
<div class="a" style="left:573.2px;top:527px;width:85.1px;height:10.8px;background:#4079ad;"></div>
<div class="t" style="left:576px;top:530.05px;font-size:5.5px;color:#f2f6fa;font-weight:bold;">IMG_4313_stol.MOV</div>
<div class="a" style="left:660px;top:486.3px;width:15px;height:51.7px;background:#2f6aa0;"></div>
<div class="a" style="left:661.2px;top:527px;width:12.6px;height:10.8px;background:#4079ad;"></div>
<div class="t" style="left:664px;top:530.05px;font-size:5.5px;color:#f2f6fa;font-weight:bold;">IM...</div>
<div class="a" style="left:675px;top:486.3px;width:83.5px;height:51.7px;background:#2f6aa0;"></div>
<div class="a" style="left:676.2px;top:527px;width:81.1px;height:10.8px;background:#4079ad;"></div>
<div class="t" style="left:679px;top:530.05px;font-size:5.5px;color:#f2f6fa;font-weight:bold;">IMG_4567_sittebenk.MOV</div>
<div class="a" style="left:758.5px;top:486.3px;width:27.100000000000023px;height:51.7px;background:#2f6aa0;"></div>
<div class="a" style="left:759.7px;top:527px;width:24.700000000000024px;height:10.8px;background:#4079ad;"></div>
<svg class="a" style="left:762.0px;top:529.3px;" width="7" height="7" viewBox="0 0 7 7"><path d="M2.8 4.2L4.2 2.8M2 3.3l-0.8 0.8a1.2 1.2 0 0 0 1.7 1.7l0.8-0.8M5 3.7l0.8-0.8a1.2 1.2 0 0 0-1.7-1.7L3.3 2" stroke="#e8eef4" fill="none" stroke-width="0.9"/></svg>
<div class="t" style="left:770.0px;top:530.05px;font-size:5.5px;color:#f2f6fa;font-weight:bold;">IM...</div>
<div class="a" style="left:786px;top:486.3px;width:233px;height:51.7px;background:#2f6aa0;"></div>
<div class="a" style="left:787.2px;top:527px;width:230.6px;height:10.8px;background:#4079ad;"></div>
<svg class="a" style="left:789.5px;top:529.3px;" width="7" height="7" viewBox="0 0 7 7"><path d="M2.8 4.2L4.2 2.8M2 3.3l-0.8 0.8a1.2 1.2 0 0 0 1.7 1.7l0.8-0.8M5 3.7l0.8-0.8a1.2 1.2 0 0 0-1.7-1.7L3.3 2" stroke="#e8eef4" fill="none" stroke-width="0.9"/></svg>
<div class="t" style="left:797.5px;top:530.05px;font-size:5.5px;color:#f2f6fa;font-weight:bold;">IMG_4312_gitarbokser.MOV</div>
<div class="a" style="left:1019.5px;top:486.3px;width:165.5px;height:51.7px;background:#2f6aa0;"></div>
<div class="a" style="left:1020.7px;top:527px;width:163.1px;height:10.8px;background:#4079ad;"></div>
<svg class="a" style="left:1023.0px;top:529.3px;" width="7" height="7" viewBox="0 0 7 7"><path d="M2.8 4.2L4.2 2.8M2 3.3l-0.8 0.8a1.2 1.2 0 0 0 1.7 1.7l0.8-0.8M5 3.7l0.8-0.8a1.2 1.2 0 0 0-1.7-1.7L3.3 2" stroke="#e8eef4" fill="none" stroke-width="0.9"/></svg>
<div class="t" style="left:1031.0px;top:530.05px;font-size:5.5px;color:#f2f6fa;font-weight:bold;">IMG_4565_minihylle.MOV</div>
<div class="a" style="left:1185.5px;top:486.3px;width:168.0px;height:51.7px;background:#2f6aa0;"></div>
<div class="a" style="left:1186.7px;top:527px;width:165.6px;height:10.8px;background:#4079ad;"></div>
<svg class="a" style="left:1189.0px;top:529.3px;" width="7" height="7" viewBox="0 0 7 7"><path d="M2.8 4.2L4.2 2.8M2 3.3l-0.8 0.8a1.2 1.2 0 0 0 1.7 1.7l0.8-0.8M5 3.7l0.8-0.8a1.2 1.2 0 0 0-1.7-1.7L3.3 2" stroke="#e8eef4" fill="none" stroke-width="0.9"/></svg>
<div class="t" style="left:1197.0px;top:530.05px;font-size:5.5px;color:#f2f6fa;font-weight:bold;">IMG_4315_3dprint.MOV</div>
<svg class="a" style="left:429.7px;top:487.5px;overflow:hidden" width="140.6" height="39" viewBox="0 0 140.6 39"><defs><filter id="tb429" x="-2%" y="-5%" width="104%" height="110%"><feGaussianBlur stdDeviation="0.8"/></filter></defs><g filter="url(#tb429)"><rect x="-0.7" y="-0.5" width="143.0" height="40.0" fill="#dcd6cc"/><rect x="-0.7" y="17.5" width="63.0" height="22.0" fill="#d2ccc2"/><path d="M15.3,39.5 L17.3,24.5 L25.3,19.5 L37.3,19.5 L44.3,25.5 L46.3,39.5Z" fill="#6a7898"/><ellipse cx="32.3" cy="13.5" rx="5.5" ry="7" fill="#cfae98"/><ellipse cx="32.3" cy="6.5" rx="6" ry="4" fill="#2a2422"/><rect x="50.3" y="20.5" width="9.0" height="12.0" fill="#b89088"/><rect x="62.3" y="0.5" width="29.0" height="39.0" fill="#d6c8a2"/><rect x="64.3" y="2.5" width="10.0" height="9.0" fill="#323236"/><rect x="76.3" y="2.5" width="12.0" height="8.0" fill="#3a3a3e"/><rect x="64.3" y="14.5" width="10.0" height="9.0" fill="#323236"/><rect x="76.3" y="13.5" width="12.0" height="8.0" fill="#3a3a3e"/><rect x="64.3" y="26.5" width="12.0" height="10.0" fill="#2e2e32"/><rect x="79.3" y="16.5" width="26.0" height="23.0" fill="#e0d2a8"/><rect x="83.3" y="23.5" width="17.0" height="16.0" fill="#cdb88c"/><rect x="91.3" y="0.5" width="40.0" height="15.0" fill="#d8d2c6"/><rect x="105.3" y="12.5" width="25.0" height="27.0" fill="#c0b49a"/><rect x="110.3" y="24.5" width="16.0" height="14.0" fill="#4e4640"/><rect x="131.3" y="0.5" width="10.0" height="18.0" fill="#4a5a80"/><rect x="130.3" y="18.5" width="11.0" height="21.0" fill="#d0c8b8"/></g></svg>
<svg class="a" style="left:573.2px;top:487.5px;overflow:hidden" width="85.1" height="39" viewBox="0 0 85.1 39"><defs><filter id="tb573" x="-2%" y="-5%" width="104%" height="110%"><feGaussianBlur stdDeviation="0.8"/></filter></defs><g filter="url(#tb573)"><rect x="-1.2" y="-0.5" width="88.0" height="40.0" fill="#cfcac0"/><path d="M0.8,1.5 L6.8,1.5 L26.8,27.5 L20.8,30.5Z" fill="#262626"/><rect x="11.8" y="0.5" width="15.0" height="15.0" fill="#bfb08c"/><rect x="16.8" y="14.5" width="22.0" height="25.0" fill="#c8b88e"/><rect x="20.8" y="18.5" width="12.0" height="16.0" fill="#9a8a70"/><rect x="30.8" y="0.5" width="20.0" height="24.0" fill="#5a6a88"/><rect x="34.8" y="24.5" width="12.0" height="15.0" fill="#6a7a98"/><rect x="38.8" y="18.5" width="22.0" height="6.0" fill="#d8c8a0"/><ellipse cx="70.8" cy="17.5" rx="10" ry="13" fill="#2a2a2a"/><ellipse cx="70.8" cy="17.5" rx="6" ry="9" fill="#c8c4bc"/><rect x="62.8" y="26.5" width="16.0" height="10.0" fill="#d8c050"/><rect x="78.8" y="0.5" width="7.0" height="39.0" fill="#d8d4cc"/></g></svg>
<svg class="a" style="left:661.2px;top:487.5px;overflow:hidden" width="12.6" height="39" viewBox="0 0 12.6 39"><defs><filter id="tb661" x="-2%" y="-5%" width="104%" height="110%"><feGaussianBlur stdDeviation="0.8"/></filter></defs><g filter="url(#tb661)"><rect x="-1.2" y="-0.5" width="15.0" height="40.0" fill="#b8b0a0"/><rect x="-1.2" y="17.5" width="15.0" height="22.0" fill="#6e665c"/></g></svg>
<svg class="a" style="left:676.2px;top:487.5px;overflow:hidden" width="81.1" height="39" viewBox="0 0 81.1 39"><defs><filter id="tb676" x="-2%" y="-5%" width="104%" height="110%"><feGaussianBlur stdDeviation="0.8"/></filter></defs><g filter="url(#tb676)"><rect x="-1.2" y="-0.5" width="84.0" height="40.0" fill="#9e8a6c"/><rect x="-0.2" y="0.5" width="24.0" height="16.0" fill="#3e342c"/><rect x="-0.2" y="16.5" width="16.0" height="23.0" fill="#d0bc90"/><path d="M23.8,0.5 L39.8,0.5 L41.8,32.5 L25.8,32.5Z" fill="#2a90c8"/><path d="M37.8,4.5 L58.8,10.5 L57.8,15.5 L37.8,12.5Z" fill="#3050b0"/><ellipse cx="60.8" cy="16.5" rx="5" ry="3" fill="#d0a890"/><rect x="23.8" y="27.5" width="22.0" height="12.0" fill="#1e1e1e"/><rect x="48.8" y="8.5" width="32.0" height="31.0" fill="#d8c8a2"/><rect x="55.8" y="14.5" width="20.0" height="19.0" fill="#8a7858"/><rect x="65.8" y="0.5" width="16.0" height="8.0" fill="#bcb0a0"/></g></svg>
<svg class="a" style="left:759.7px;top:487.5px;overflow:hidden" width="24.7" height="39" viewBox="0 0 24.7 39"><defs><filter id="tb759" x="-2%" y="-5%" width="104%" height="110%"><feGaussianBlur stdDeviation="0.8"/></filter></defs><g filter="url(#tb759)"><rect x="-1.7" y="-0.5" width="28.0" height="40.0" fill="#9aa090"/><rect x="0.3" y="4.5" width="10.0" height="30.0" fill="#5a6850"/><rect x="15.3" y="0.5" width="10.0" height="22.0" fill="#4a5a80"/><rect x="12.3" y="22.5" width="13.0" height="17.0" fill="#c8c8c0"/></g></svg>
<svg class="a" style="left:787.2px;top:487.5px;overflow:hidden" width="230.6" height="39" viewBox="0 0 230.6 39"><defs><filter id="tb787" x="-2%" y="-5%" width="104%" height="110%"><feGaussianBlur stdDeviation="0.8"/></filter></defs><g filter="url(#tb787)"><rect x="-1.2" y="-0.5" width="233.0" height="40.0" fill="#dfdad0"/><rect x="4.8" y="0.5" width="8.0" height="39.0" fill="#c8c0b4"/><rect x="2.8" y="20.5" width="8.0" height="8.0" fill="#caa890"/><path d="M20.8,39.5 L22.8,28.5 L30.8,24.5 L48.8,24.5 L55.8,30.5 L57.8,39.5Z" fill="#2c3868"/><ellipse cx="35.8" cy="12.5" rx="6.5" ry="9" fill="#cfa994"/><ellipse cx="35.8" cy="4.5" rx="6" ry="3.5" fill="#7a6050"/><rect x="62.8" y="15.5" width="8.0" height="24.0" fill="#a83232"/><rect x="72.8" y="12.5" width="6.0" height="10.0" fill="#caa890"/><rect x="80.8" y="0.5" width="4.0" height="39.0" fill="#c8c0b4"/><path d="M89.8,39.5 L91.8,29.5 L98.8,25.5 L115.8,25.5 L122.8,32.5 L124.8,39.5Z" fill="#2c3868"/><ellipse cx="102.8" cy="14.5" rx="6.5" ry="9" fill="#cfa994"/><ellipse cx="102.8" cy="6.5" rx="6" ry="3.5" fill="#6a5040"/><rect x="130.8" y="8.5" width="12.0" height="31.0" fill="#a83232"/><rect x="152.8" y="17.5" width="12.0" height="10.0" fill="#caa890"/><path d="M157.8,39.5 L162.8,29.5 L170.8,25.5 L190.8,25.5 L198.8,32.5 L201.8,39.5Z" fill="#2c3868"/><ellipse cx="178.8" cy="12.5" rx="6.5" ry="9" fill="#cfa994"/><ellipse cx="178.8" cy="4.5" rx="6" ry="3.5" fill="#6a5040"/><rect x="200.8" y="10.5" width="15.0" height="29.0" fill="#a83232"/><rect x="214.8" y="2.5" width="10.0" height="37.0" fill="#d0c8c0"/></g></svg>
<svg class="a" style="left:1020.7px;top:487.5px;overflow:hidden" width="163.1" height="39" viewBox="0 0 163.1 39"><defs><filter id="tb1020" x="-2%" y="-5%" width="104%" height="110%"><feGaussianBlur stdDeviation="0.8"/></filter></defs><g filter="url(#tb1020)"><rect x="-1.7" y="-0.5" width="166.0" height="40.0" fill="#cfc8bc"/><path d="M0.3,-0.5 L49.3,-0.5 L39.3,12.5 L0.3,14.5Z" fill="#e8e4dc"/><rect x="0.3" y="27.5" width="19.0" height="12.0" fill="#e0dcd8"/><rect x="9.3" y="32.5" width="10.0" height="7.0" fill="#b83030"/><rect x="27.3" y="10.5" width="7.0" height="27.0" fill="#5a4a38"/><rect x="35.3" y="13.5" width="8.0" height="26.0" fill="#303030"/><rect x="37.3" y="26.5" width="6.0" height="13.0" fill="#e0e0e0"/><rect x="45.3" y="14.5" width="6.0" height="23.0" fill="#6a6a6a"/><rect x="53.3" y="22.5" width="16.0" height="17.0" fill="#c07040"/><rect x="69.3" y="0.5" width="35.0" height="12.0" fill="#3a3634"/><path d="M75.3,39.5 L76.3,15.5 L84.3,9.5 L92.3,15.5 L93.3,39.5Z" fill="#d8d8d8"/><rect x="78.3" y="17.5" width="13.0" height="4.0" fill="#222"/><rect x="78.3" y="25.5" width="13.0" height="4.0" fill="#222"/><rect x="78.3" y="33.5" width="13.0" height="4.0" fill="#222"/><ellipse cx="84.3" cy="6.5" rx="5" ry="6" fill="#d8c098"/><rect x="97.3" y="18.5" width="20.0" height="21.0" fill="#aaa296"/><path d="M118.3,30.5 L119.3,14.5 L127.3,10.5 L135.3,14.5 L136.3,30.5Z" fill="#d8c890"/><ellipse cx="127.3" cy="6.5" rx="3.5" ry="4" fill="#c8a888"/><rect x="121.3" y="30.5" width="10.0" height="9.0" fill="#2a2a2a"/><rect x="137.3" y="12.5" width="9.0" height="27.0" fill="#6a6a70"/><path d="M146.3,39.5 L147.3,15.5 L155.3,10.5 L164.3,12.5 L164.3,39.5Z" fill="#e0e0e0"/><rect x="147.3" y="18.5" width="17.0" height="3.0" fill="#2a2a48"/><rect x="147.3" y="25.5" width="17.0" height="3.0" fill="#2a2a48"/><rect x="147.3" y="32.5" width="17.0" height="3.0" fill="#2a2a48"/><ellipse cx="156.3" cy="6.5" rx="6" ry="6" fill="#d8c0a0"/></g></svg>
<svg class="a" style="left:1186.7px;top:487.5px;overflow:hidden" width="165.6" height="39" viewBox="0 0 165.6 39"><defs><filter id="tb1186" x="-2%" y="-5%" width="104%" height="110%"><feGaussianBlur stdDeviation="0.8"/></filter></defs><g filter="url(#tb1186)"><rect x="-1.7" y="-0.5" width="169.0" height="40.0" fill="#b6b6c4"/><rect x="-0.7" y="17.5" width="19.0" height="22.0" fill="#8a8a92"/><rect x="3.3" y="10.5" width="13.0" height="12.0" fill="#2e2e30"/><rect x="18.3" y="-0.5" width="4.0" height="40.0" fill="#2a2a2c"/><ellipse cx="34.3" cy="13.5" rx="4" ry="6" fill="#c8b090"/><path d="M22.3,39.5 L24.3,24.5 L34.3,19.5 L44.3,24.5 L46.3,39.5Z" fill="#3a3a3c"/><rect x="56.3" y="-0.5" width="4.0" height="40.0" fill="#2a2a2c"/><rect x="60.3" y="15.5" width="8.0" height="24.0" fill="#d8d8e0"/><rect x="68.3" y="2.5" width="20.0" height="15.0" fill="#2e2e30"/><rect x="71.3" y="5.5" width="14.0" height="10.0" fill="#c8c8d0"/><rect x="81.3" y="18.5" width="12.0" height="4.0" fill="#d88030"/><rect x="70.3" y="22.5" width="26.0" height="17.0" fill="#5a5a5e"/><rect x="96.3" y="-0.5" width="4.0" height="40.0" fill="#2a2a2c"/><rect x="103.3" y="6.5" width="12.0" height="11.0" fill="#2e2e30"/><rect x="103.3" y="20.5" width="10.0" height="4.0" fill="#d88030"/><ellipse cx="125.3" cy="11.5" rx="10" ry="11" fill="#c8b48a"/><path d="M110.3,39.5 L113.3,22.5 L126.3,17.5 L138.3,24.5 L140.3,39.5Z" fill="#4a4a4c"/><rect x="122.3" y="30.5" width="5.0" height="6.0" fill="#b04040"/><rect x="138.3" y="-0.5" width="28.0" height="40.0" fill="#7a7880"/><path d="M138.3,-0.5 L166.3,-0.5 L166.3,6.5 L138.3,12.5Z" fill="#3a3a3e"/></g></svg>
<div class="a" style="left:673.5px;top:486px;width:3px;height:4px;background:#f4f4f4;border-radius:1.5px"></div>
<div class="a" style="left:673.5px;top:540px;width:3px;height:3.5px;background:#f4f4f4;border-radius:1.5px"></div>
<div class="a" style="left:757.0px;top:486px;width:3px;height:4px;background:#f4f4f4;border-radius:1.5px"></div>
<div class="a" style="left:757.0px;top:540px;width:3px;height:3.5px;background:#f4f4f4;border-radius:1.5px"></div>
<div class="a" style="left:428.5px;top:540.5px;width:952.5px;height:135.5px;background:#3f8e5e;"></div>
<svg class="a" style="left:428px;top:540px;" width="953" height="136" viewBox="0 0 953 136"><path d="M1.5 61.6V70.4M2.5 62.0V70.0M3.5 62.5V69.5M4.5 61.7V70.3M5.5 62.1V69.9M6.5 61.9V70.1M7.5 61.8V70.2M8.5 61.9V70.1M9.5 62.0V70.0M10.5 61.6V70.4M11.5 62.1V69.9M12.5 62.1V69.9M13.5 61.6V70.4M14.5 62.3V69.7M15.5 62.2V69.8M16.5 61.7V70.3M17.5 62.4V69.6M18.5 61.7V70.3M19.5 61.8V70.2M20.5 62.1V69.9M21.5 62.2V69.8M22.5 61.7V70.3M23.5 61.6V70.4M24.5 54.4V77.5M25.5 28.0V97.0M26.5 53.0V78.5M27.5 55.4V76.6M28.5 26.1V110.8M29.5 51.0V81.7M30.5 31.0V98.6M31.5 46.6V83.7M32.5 56.7V75.6M33.5 57.8V74.8M34.5 56.7V74.5M35.5 56.5V75.2M36.5 57.3V73.9M37.5 59.0V72.6M38.5 59.3V73.4M39.5 55.8V74.7M40.5 44.9V85.1M41.5 46.0V88.7M42.5 57.7V74.6M43.5 55.0V76.6M44.5 57.8V72.8M45.5 60.0V72.2M46.5 58.6V72.9M47.5 55.1V75.9M48.5 53.8V78.1M49.5 54.9V76.9M50.5 21.6V113.8M51.5 57.5V74.0M52.5 57.6V74.5M53.5 59.1V73.9M54.5 60.1V71.7M55.5 60.2V71.1M56.5 59.6V72.0M57.5 58.9V71.7M58.5 57.8V74.3M59.5 59.6V72.8M60.5 57.8V73.0M61.5 58.4V74.5M62.5 57.6V75.4M63.5 53.9V80.0M64.5 25.8V102.1M65.5 51.4V79.9M66.5 21.2V116.2M67.5 48.3V82.1M68.5 52.9V78.1M69.5 56.2V76.7M70.5 54.1V78.8M71.5 55.6V75.6M72.5 54.9V78.9M73.5 52.4V80.5M74.5 48.6V84.1M75.5 46.7V84.0M76.5 54.1V77.3M77.5 60.4V72.2M78.5 61.0V72.0M79.5 61.5V70.6M80.5 61.6V71.0M81.5 60.9V71.2M82.5 59.7V72.0M83.5 56.5V74.4M84.5 55.8V76.0M85.5 57.4V73.7M86.5 59.4V71.7M87.5 60.9V71.9M88.5 61.3V71.0M89.5 62.0V70.8M90.5 61.9V70.7M91.5 61.4V71.2M92.5 61.4V71.4M93.5 60.9V71.6M94.5 58.4V73.0M95.5 59.7V71.7M96.5 31.4V104.4M97.5 56.5V75.3M98.5 54.2V76.3M99.5 56.3V75.4M100.5 57.8V73.6M101.5 60.4V71.8M102.5 60.5V70.5M103.5 61.0V71.3M104.5 61.5V70.1M105.5 61.6V70.7M106.5 40.9V91.7M107.5 58.5V73.2M108.5 56.0V75.7M109.5 53.2V79.1M110.5 54.1V78.0M111.5 51.8V80.0M112.5 54.3V79.1M113.5 56.7V76.0M114.5 53.6V78.1M115.5 58.5V74.2M116.5 60.5V71.3M117.5 61.6V71.1M118.5 59.9V71.7M119.5 60.3V71.9M120.5 59.6V72.5M121.5 57.6V72.9M122.5 56.2V75.4M123.5 53.2V78.4M124.5 54.4V78.7M125.5 54.8V78.2M126.5 45.6V86.6M127.5 56.8V75.4M128.5 55.9V77.4M129.5 51.9V82.2M130.5 51.8V82.1M131.5 49.4V83.0M132.5 44.2V84.9M133.5 47.3V84.6M134.5 49.1V81.5M135.5 48.6V84.1M136.5 62.1V69.9M137.5 62.0V70.0M138.5 61.8V70.2M139.5 61.8V70.2M140.5 62.4V69.6M141.5 62.1V69.9M142.5 58.9V74.2M143.5 56.4V76.8M144.5 24.5V103.0M145.5 55.6V77.6M146.5 48.2V84.9M147.5 51.3V79.6M148.5 56.7V74.1M149.5 58.2V72.6M150.5 60.3V72.4M151.5 58.9V71.7M152.5 59.6V74.0M153.5 42.2V89.3M154.5 39.9V88.8M155.5 38.0V92.2M156.5 35.6V93.8M157.5 55.9V76.0M158.5 27.5V109.4M159.5 53.8V80.3M160.5 55.1V79.0M161.5 55.3V74.7M162.5 56.5V75.1M163.5 44.6V85.2M164.5 52.4V77.3M165.5 55.9V75.2M166.5 56.0V76.0M167.5 59.0V72.7M168.5 56.7V73.9M169.5 55.5V74.8M170.5 57.2V74.8M171.5 50.9V78.5M172.5 50.7V82.0M173.5 54.9V75.1M174.5 51.5V81.0M175.5 38.5V96.5M176.5 40.9V92.5M177.5 54.1V78.5M178.5 50.6V78.9M179.5 57.7V75.2M180.5 52.7V81.3M181.5 54.8V75.2M182.5 56.0V75.1M183.5 47.6V83.4M184.5 61.5V70.5M185.5 62.2V69.8M186.5 62.2V69.8M187.5 61.7V70.3M188.5 61.8V70.2M189.5 62.2V69.8M190.5 61.7V70.3M191.5 61.9V70.1M192.5 62.1V69.9M193.5 61.5V71.3M194.5 61.0V70.9M195.5 59.5V71.5M196.5 57.6V75.3M197.5 57.1V76.5M198.5 52.8V82.0M199.5 33.2V98.6M200.5 59.1V72.6M201.5 60.7V70.3M202.5 61.2V70.4M203.5 59.8V71.5M204.5 60.8V72.2M205.5 42.0V92.5M206.5 58.1V73.8M207.5 56.7V75.7M208.5 41.5V90.8M209.5 51.7V79.4M210.5 53.9V77.4M211.5 56.2V74.3M212.5 55.2V74.6M213.5 58.2V75.1M214.5 57.1V77.5M215.5 57.3V73.7M216.5 59.5V72.5M217.5 58.6V71.9M218.5 60.2V71.6M219.5 61.6V70.9M220.5 34.5V95.8M221.5 60.0V71.3M222.5 61.2V71.4M223.5 60.2V71.7M224.5 58.3V72.7M225.5 57.9V73.0M226.5 56.7V76.6M227.5 57.3V77.0M228.5 55.2V75.9M229.5 55.6V75.1M230.5 56.7V74.1M231.5 58.3V72.5M232.5 58.0V73.8M233.5 58.9V71.9M234.5 59.7V71.7M235.5 33.1V105.3M236.5 60.5V71.3M237.5 59.0V73.1M238.5 56.1V75.9M239.5 28.8V103.0M240.5 57.3V76.1M241.5 47.6V83.7M242.5 52.7V80.0M243.5 53.3V80.0M244.5 57.9V74.2M245.5 59.5V71.8M246.5 57.3V73.4M247.5 53.8V79.1M248.5 57.6V76.1M249.5 53.2V78.6M250.5 55.6V77.0M251.5 51.8V77.9M252.5 57.6V74.2M253.5 58.5V74.3M254.5 53.5V78.7M255.5 55.9V75.8M256.5 48.1V84.5M257.5 19.4V103.9M258.5 58.1V74.5M259.5 59.0V74.0M260.5 58.1V73.4M261.5 56.5V74.4M262.5 59.8V71.6M263.5 59.3V73.0M264.5 57.8V74.3M265.5 57.1V74.9M266.5 56.6V74.7M267.5 57.7V74.5M268.5 57.8V73.2M269.5 59.2V72.4M270.5 45.6V84.6M271.5 58.6V73.2M272.5 58.2V74.0M273.5 30.3V99.1M274.5 51.7V79.3M275.5 55.3V76.8M276.5 55.1V78.6M277.5 59.5V73.3M278.5 30.0V101.1M279.5 59.2V73.5M280.5 61.2V71.6M281.5 59.7V73.2M282.5 59.5V72.7M283.5 33.1V99.4M284.5 57.9V72.9M285.5 57.2V72.9M286.5 55.9V75.6M287.5 58.0V74.8M288.5 56.7V75.8M289.5 56.0V75.2M290.5 56.2V75.1M291.5 57.1V74.4M292.5 58.5V74.4M293.5 59.3V72.7M294.5 59.4V71.4M295.5 58.3V72.1M296.5 58.7V74.0M297.5 58.8V73.5M298.5 53.3V78.6M299.5 57.1V75.7M300.5 59.6V73.8M301.5 59.2V72.8M302.5 58.1V72.3M303.5 56.5V75.0M304.5 57.5V73.4M305.5 58.7V73.6M306.5 60.1V73.3M307.5 60.2V71.9M308.5 60.7V70.7M309.5 61.7V71.2M310.5 61.5V70.8M311.5 60.1V71.6M312.5 60.1V72.0M313.5 57.6V74.2M314.5 18.9V115.3M315.5 47.9V83.7M316.5 43.2V87.5M317.5 57.3V74.7M318.5 50.4V80.3M319.5 53.6V77.5M320.5 54.5V77.4M321.5 51.7V78.7M322.5 48.1V82.7M323.5 54.2V78.5M324.5 55.6V76.0M325.5 58.8V73.8M326.5 58.6V73.2M327.5 58.6V75.0M328.5 57.7V74.4M329.5 55.5V76.7M330.5 58.3V73.8M331.5 58.9V73.4M332.5 58.1V74.5M333.5 58.9V73.0M334.5 59.5V71.6M335.5 60.9V70.9M336.5 37.2V92.6M337.5 60.4V72.4M338.5 59.4V72.5M339.5 59.5V73.7M340.5 55.8V76.2M341.5 56.3V75.1M342.5 52.6V78.3M343.5 57.7V73.6M344.5 55.5V76.5M345.5 56.1V75.9M346.5 51.2V80.9M347.5 56.3V76.5M348.5 51.5V79.4M349.5 54.5V78.8M350.5 59.3V71.3M351.5 60.9V71.5M352.5 60.9V71.3M353.5 59.2V72.9M354.5 58.6V73.5M355.5 51.7V79.4M356.5 48.7V82.6M357.5 47.3V85.5M358.5 31.6V102.2M359.5 57.5V73.1M360.5 59.7V73.0M361.5 59.5V72.2M362.5 60.1V72.2M363.5 58.0V74.4M364.5 57.0V75.9M365.5 40.4V90.7M366.5 38.6V91.9M367.5 44.2V83.0M368.5 48.2V85.2M369.5 43.7V88.7M370.5 56.0V77.2M371.5 28.7V100.8M372.5 57.4V74.4M373.5 57.8V73.8M374.5 58.1V73.2M375.5 59.5V72.4M376.5 58.9V72.8M377.5 47.4V82.6M378.5 57.3V74.9M379.5 55.4V75.7M380.5 30.5V98.8M381.5 27.2V102.3M382.5 57.7V73.8M383.5 59.3V73.6M384.5 55.9V76.1M385.5 54.0V81.0M386.5 45.3V83.8M387.5 43.7V87.8M388.5 50.8V82.1M389.5 53.5V76.4M390.5 58.0V74.1M391.5 55.7V76.7M392.5 49.1V83.7M393.5 56.9V75.4M394.5 47.3V84.0M395.5 48.6V83.5M396.5 25.6V100.5M397.5 49.8V81.0M398.5 53.0V76.2M399.5 52.8V78.3M400.5 55.6V76.2M401.5 56.4V76.8M402.5 56.9V74.4M403.5 58.1V72.8M404.5 60.3V72.9M405.5 59.7V72.3M406.5 56.6V76.0M407.5 54.4V80.2M408.5 55.8V75.3M409.5 49.7V79.9M410.5 50.7V81.8M411.5 55.9V77.9M412.5 54.9V77.4M413.5 46.7V85.4M414.5 56.9V75.4M415.5 59.5V72.3M416.5 60.3V73.1M417.5 58.8V73.3M418.5 58.1V75.4M419.5 55.4V76.4M420.5 53.4V81.0M421.5 54.6V76.1M422.5 56.4V75.1M423.5 52.4V78.6M424.5 57.9V74.8M425.5 58.6V73.2M426.5 58.7V73.1M427.5 58.2V74.1M428.5 56.6V75.0M429.5 54.6V78.7M430.5 53.5V75.9M431.5 55.1V75.1M432.5 55.3V75.2M433.5 57.2V73.5M434.5 59.2V71.7M435.5 60.3V72.9M436.5 60.0V71.8M437.5 59.8V73.5M438.5 57.6V75.5M439.5 55.7V77.5M440.5 53.2V79.0M441.5 49.9V81.6M442.5 36.6V92.7M443.5 47.6V83.5M444.5 46.8V81.8M445.5 53.5V76.0M446.5 47.8V83.5M447.5 32.0V98.0M448.5 56.4V74.5M449.5 57.8V72.6M450.5 59.7V72.4M451.5 56.6V74.5M452.5 56.8V76.4M453.5 57.0V75.2M454.5 56.1V74.4M455.5 55.2V75.4M456.5 56.6V75.7M457.5 56.1V75.3M458.5 47.3V82.8M459.5 50.3V79.7M460.5 45.5V83.0M461.5 45.0V84.8M462.5 50.3V80.2M463.5 50.2V80.1M464.5 56.0V76.6M465.5 56.7V75.4M466.5 51.5V82.0M467.5 49.4V84.6M468.5 51.4V82.1M469.5 49.0V83.0M470.5 48.3V86.2M471.5 53.7V78.9M472.5 55.9V74.7M473.5 58.2V75.5M474.5 56.2V75.9M475.5 58.2V73.9M476.5 52.8V78.6M477.5 56.7V75.9M478.5 55.3V76.9M479.5 52.4V78.5M480.5 54.3V78.5M481.5 54.7V77.3M482.5 52.2V79.8M483.5 56.4V74.8M484.5 55.8V75.4M485.5 58.0V73.5M486.5 54.8V77.9M487.5 53.5V78.8M488.5 52.4V77.0M489.5 50.5V81.3M490.5 54.4V75.1M491.5 58.1V73.5M492.5 58.1V75.1M493.5 56.9V75.8M494.5 54.4V78.4M495.5 25.0V104.3M496.5 54.3V77.1M497.5 48.6V84.8M498.5 44.0V86.7M499.5 46.3V84.4M500.5 52.5V79.5M501.5 53.5V78.1M502.5 54.2V79.3M503.5 33.1V95.0M504.5 48.9V86.0M505.5 50.8V82.4M506.5 49.8V84.7M507.5 51.1V80.1M508.5 55.1V77.5M509.5 52.1V79.9M510.5 56.5V74.9M511.5 58.5V73.0M512.5 57.5V73.7M513.5 57.6V74.8M514.5 57.2V73.6M515.5 56.7V73.9M516.5 58.2V74.0M517.5 58.2V74.9M518.5 57.3V74.1M519.5 58.1V75.0M520.5 54.8V77.0M521.5 52.9V80.0M522.5 44.8V88.0M523.5 49.7V84.0M524.5 50.3V81.2M525.5 56.5V78.2M526.5 43.6V86.8M527.5 58.1V75.5M528.5 59.1V73.0M529.5 58.2V72.9M530.5 58.2V75.7M531.5 54.9V77.0M532.5 53.5V77.4M533.5 50.7V83.2M534.5 54.3V76.9M535.5 48.3V83.0M536.5 51.3V81.2M537.5 51.9V82.8M538.5 51.2V80.7M539.5 55.0V78.2M540.5 51.8V80.1M541.5 56.2V75.6M542.5 47.3V84.8M543.5 44.9V87.4M544.5 54.5V79.2M545.5 50.6V81.4M546.5 57.6V73.7M547.5 57.3V74.4M548.5 56.1V75.3M549.5 57.6V72.8M550.5 58.0V74.8M551.5 58.0V74.1M552.5 57.2V74.3M553.5 57.5V75.7M554.5 56.1V75.3M555.5 55.5V76.9M556.5 33.9V106.3M557.5 40.6V88.3M558.5 42.0V90.8M559.5 56.5V74.1M560.5 57.6V73.3M561.5 57.4V73.6M562.5 57.9V74.4M563.5 54.9V78.0M564.5 55.0V75.9M565.5 56.0V74.7M566.5 54.0V77.5M567.5 52.5V79.2M568.5 50.2V80.7M569.5 49.3V80.8M570.5 54.1V78.3M571.5 52.3V79.8M572.5 53.5V78.4M573.5 58.0V74.3M574.5 58.7V73.3M575.5 58.6V74.6M576.5 58.6V73.9M577.5 58.6V72.8M578.5 36.6V97.6M579.5 54.1V76.8M580.5 54.2V80.0M581.5 54.6V79.6M582.5 51.8V79.0M583.5 53.5V80.5M584.5 48.8V81.4M585.5 55.0V78.7M586.5 52.9V79.9M587.5 50.5V80.5M588.5 50.0V80.8M589.5 47.5V84.9M590.5 48.5V82.5M591.5 49.6V82.3M592.5 49.0V81.6M593.5 55.3V78.2M594.5 53.6V78.3M595.5 56.8V76.2M596.5 40.3V91.7M597.5 55.6V76.7M598.5 51.5V80.6M599.5 46.5V84.3M600.5 48.2V81.6M601.5 54.2V76.9M602.5 32.5V95.9M603.5 56.6V74.7M604.5 59.0V72.6M605.5 58.3V74.4M606.5 55.5V75.7M607.5 55.7V75.7M608.5 53.9V79.1M609.5 44.3V87.6M610.5 19.5V114.4M611.5 57.7V75.4M612.5 35.4V102.6M613.5 55.2V75.7M614.5 24.5V114.6M615.5 58.9V72.6M616.5 57.6V75.4M617.5 54.8V78.1M618.5 55.5V78.2M619.5 55.1V77.6M620.5 42.9V85.8M621.5 53.0V78.7M622.5 51.6V81.1M623.5 57.2V75.0M624.5 56.3V74.5M625.5 56.4V74.6M626.5 57.1V73.9M627.5 51.2V81.8M628.5 53.2V77.5M629.5 49.7V82.0M630.5 51.7V79.9M631.5 44.3V85.2M632.5 53.0V80.4M633.5 26.5V106.4M634.5 56.6V78.0M635.5 56.1V76.3M636.5 58.1V75.2M637.5 58.6V73.3M638.5 60.3V72.5M639.5 58.1V72.3M640.5 40.7V92.3M641.5 53.5V76.9M642.5 42.5V86.7M643.5 28.7V101.8M644.5 58.6V73.9M645.5 60.5V73.0M646.5 59.6V72.3M647.5 57.7V73.7M648.5 57.6V74.8M649.5 54.3V76.1M650.5 17.3V118.4M651.5 53.5V76.9M652.5 54.8V77.2M653.5 56.4V74.1M654.5 58.2V73.1M655.5 58.5V72.3M656.5 59.5V72.0M657.5 59.6V72.1M658.5 59.5V71.9M659.5 60.1V72.3M660.5 55.3V77.2M661.5 46.4V82.6M662.5 50.3V79.9M663.5 51.3V82.0M664.5 42.9V87.4M665.5 59.3V72.1M666.5 60.0V71.8M667.5 61.0V71.3M668.5 59.0V72.4M669.5 57.2V75.3M670.5 56.0V77.5M671.5 32.0V108.7M672.5 57.2V75.4M673.5 56.7V76.3M674.5 60.0V71.9M675.5 57.8V72.4M676.5 54.0V80.4M677.5 55.6V76.4M678.5 29.3V105.9M679.5 18.4V107.0M680.5 56.5V74.0M681.5 59.0V73.2M682.5 57.9V73.8M683.5 12.5V111.8M684.5 15.8V111.7M685.5 52.4V79.5M686.5 55.0V75.6M687.5 27.9V99.8M688.5 58.8V74.1M689.5 55.5V77.2M690.5 50.5V81.8M691.5 36.8V92.9M692.5 45.9V82.8M693.5 44.7V84.1M694.5 50.7V81.1M695.5 54.0V81.0M696.5 55.6V77.5M697.5 56.1V75.5M698.5 56.2V76.7M699.5 47.0V87.1M700.5 54.2V80.5M701.5 50.0V81.7M702.5 56.5V75.5M703.5 59.7V71.8M704.5 59.1V73.6M705.5 57.2V75.7M706.5 57.1V75.1M707.5 55.2V75.7M708.5 52.8V78.3M709.5 53.7V76.0M710.5 57.1V75.3M711.5 54.2V75.6M712.5 52.3V80.7M713.5 50.0V83.6M714.5 52.3V79.7M715.5 49.2V86.3M716.5 26.8V113.5M717.5 54.6V78.0M718.5 52.8V77.1M719.5 52.4V80.2M720.5 45.7V83.3M721.5 51.4V79.5M722.5 53.7V77.8M723.5 57.6V73.7M724.5 59.1V73.9M725.5 57.8V75.2M726.5 54.9V76.7M727.5 56.8V75.7M728.5 49.4V81.6M729.5 55.5V76.3M730.5 43.3V87.5M731.5 54.5V76.0M732.5 53.0V78.6M733.5 54.1V78.3M734.5 58.6V74.6M735.5 59.7V72.4M736.5 59.9V71.9M737.5 59.5V73.0M738.5 59.6V73.9M739.5 57.3V75.4M740.5 56.2V77.0M741.5 48.9V84.3M742.5 49.8V85.1M743.5 45.7V84.0M744.5 19.4V115.3M745.5 51.0V79.6M746.5 51.6V77.7M747.5 55.9V78.6M748.5 59.4V72.3M749.5 58.5V73.1M750.5 58.7V72.2M751.5 38.1V93.6M752.5 58.4V75.1M753.5 35.0V97.5M754.5 26.3V104.5M755.5 46.1V83.3M756.5 44.8V86.8M757.5 49.5V82.9M758.5 54.8V76.3M759.5 47.6V81.1M760.5 53.5V78.3M761.5 46.9V84.0M762.5 49.0V82.6M763.5 41.4V88.0M764.5 56.0V77.2M765.5 53.9V80.1M766.5 57.0V74.3M767.5 56.9V73.8M768.5 59.3V73.6M769.5 58.2V74.3M770.5 58.0V73.7M771.5 47.8V84.3M772.5 54.4V79.9M773.5 51.2V80.5M774.5 48.6V81.2M775.5 45.0V85.0M776.5 53.9V80.1M777.5 48.0V85.0M778.5 49.6V80.7M779.5 54.3V79.8M780.5 56.1V76.5M781.5 57.9V72.9M782.5 56.6V76.3M783.5 46.0V89.2M784.5 45.5V86.8M785.5 55.1V76.2M786.5 54.6V77.6M787.5 51.8V82.2M788.5 34.0V104.8M789.5 51.2V80.5M790.5 55.4V76.8M791.5 48.5V84.0M792.5 52.7V76.8M793.5 54.2V78.3M794.5 31.2V99.1M795.5 47.4V83.2M796.5 52.2V78.2M797.5 41.0V92.4M798.5 52.4V78.6M799.5 56.4V77.2M800.5 55.2V77.0M801.5 55.1V77.9M802.5 53.4V76.4M803.5 57.2V76.3M804.5 51.9V79.6M805.5 50.6V81.0M806.5 56.2V74.6M807.5 57.7V73.9M808.5 56.2V76.3M809.5 50.0V80.2M810.5 33.3V94.7M811.5 32.7V99.6M812.5 49.9V80.0M813.5 48.6V83.0M814.5 36.7V88.6M815.5 55.3V77.3M816.5 55.7V77.4M817.5 37.3V90.3M818.5 58.6V72.7M819.5 56.7V74.3M820.5 56.2V76.7M821.5 54.8V77.3M822.5 55.3V75.2M823.5 37.5V101.1M824.5 49.4V86.1M825.5 36.8V100.4M826.5 44.6V90.2M827.5 48.1V82.8M828.5 54.7V75.5M829.5 53.2V77.8M830.5 55.0V76.9M831.5 46.3V83.3M832.5 48.2V83.3M833.5 41.9V90.6M834.5 52.1V79.9M835.5 49.7V82.0M836.5 56.8V74.6M837.5 55.7V77.5M838.5 55.9V76.3M839.5 54.3V75.6M840.5 54.4V77.3M841.5 53.9V79.2M842.5 37.6V95.5M843.5 54.0V80.1M844.5 50.1V80.3M845.5 53.5V78.2M846.5 56.1V77.8M847.5 56.2V75.0M848.5 57.8V74.6M849.5 55.8V76.8M850.5 52.5V78.1M851.5 56.3V75.8M852.5 56.3V76.8M853.5 52.9V78.0M854.5 54.4V77.2M855.5 52.1V79.5M856.5 36.7V100.2M857.5 52.0V78.2M858.5 55.4V78.3M859.5 55.6V78.3M860.5 55.4V75.1M861.5 54.1V78.5M862.5 56.1V77.4M863.5 52.3V80.8M864.5 34.7V93.6M865.5 48.6V83.4M866.5 49.0V82.9M867.5 47.8V81.2M868.5 55.3V77.5M869.5 54.6V80.2M870.5 49.4V84.2M871.5 53.8V77.5M872.5 52.7V79.8M873.5 55.5V74.8M874.5 59.5V74.1M875.5 58.2V73.5M876.5 59.1V72.8M877.5 59.7V73.2M878.5 59.0V72.6M879.5 57.9V72.9M880.5 58.1V74.3M881.5 54.3V79.3M882.5 52.2V79.8M883.5 53.0V80.3M884.5 52.0V83.2M885.5 54.3V75.1M886.5 55.0V78.2M887.5 55.0V78.1M888.5 56.9V76.7M889.5 56.8V74.5M890.5 54.8V75.7M891.5 55.3V77.5M892.5 53.9V77.7M893.5 55.6V76.1M894.5 54.4V77.0M895.5 56.1V75.7M896.5 51.0V80.2M897.5 47.6V81.7M898.5 46.1V86.6M899.5 51.7V82.9M900.5 54.6V77.6M901.5 52.8V78.8M902.5 55.2V77.8M903.5 57.4V75.4M904.5 57.0V74.6M905.5 54.5V77.0M906.5 55.2V74.8M907.5 49.4V82.7M908.5 52.0V82.2M909.5 49.9V81.2M910.5 51.9V80.1M911.5 52.4V80.9M912.5 53.1V79.3M913.5 54.2V76.9M914.5 53.5V79.6M915.5 46.0V81.7M916.5 54.8V76.1M917.5 54.9V77.7M918.5 55.3V75.9M919.5 57.9V74.3M920.5 58.4V74.5M921.5 57.9V73.9M922.5 57.2V74.2M923.5 55.6V77.4M924.5 55.4V75.5M925.5 52.9V79.1M926.5 52.8V78.4M927.5 55.1V77.4M928.5 55.4V77.2M929.5 58.5V74.9M930.5 37.6V94.9M931.5 41.2V92.3M932.5 55.2V76.6M933.5 56.6V76.7M934.5 56.3V77.2M935.5 51.3V79.3M936.5 53.2V79.3M937.5 58.0V75.1M938.5 57.0V74.1M939.5 57.7V75.9M940.5 59.0V73.7M941.5 59.3V73.5M942.5 58.6V71.7M943.5 58.8V72.2M944.5 57.4V74.5M945.5 56.7V75.1M946.5 53.6V77.6M947.5 40.1V91.0M948.5 51.0V79.7M949.5 55.5V75.2M950.5 54.7V77.3M951.5 54.4V77.1M952.5 50.7V83.7" stroke="#dcf1e2" stroke-width="1"/><rect x="0.5" y="65.5" width="952" height="1" fill="#c0d8c8" opacity="0.5"/><rect x="0.5" y="53" width="952" height="0.7" fill="#7ab890" opacity="0.5"/><path d="M930 0.5H953V136Z" fill="#27573a" opacity="0.85"/></svg>
<div class="a" style="left:532.5px;top:540.5px;width:1px;height:135.5px;background:#245a38;"></div>
<div class="a" style="left:537.0px;top:540.5px;width:1px;height:135.5px;background:#245a38;"></div>
<div class="a" style="left:613.0px;top:540.5px;width:1px;height:135.5px;background:#245a38;"></div>
<div class="a" style="left:621.1px;top:540.5px;width:1px;height:135.5px;background:#245a38;"></div>
<div class="a" style="left:659.0px;top:540.5px;width:1px;height:135.5px;background:#245a38;"></div>
<div class="a" style="left:674.5px;top:540.5px;width:1px;height:135.5px;background:#245a38;"></div>
<div class="a" style="left:758.0px;top:540.5px;width:1px;height:135.5px;background:#245a38;"></div>
<div class="a" style="left:785.1px;top:540.5px;width:1px;height:135.5px;background:#245a38;"></div>
<div class="a" style="left:1018.7px;top:540.5px;width:1px;height:135.5px;background:#245a38;"></div>
<div class="a" style="left:1185.0px;top:540.5px;width:1px;height:135.5px;background:#245a38;"></div>
<div class="a" style="left:433px;top:673.5px;width:6px;height:2.5px;background:#e8f0ea;"></div>
<div class="a" style="left:537px;top:673.5px;width:6px;height:2.5px;background:#e8f0ea;"></div>
<div class="a" style="left:622px;top:673.5px;width:6px;height:2.5px;background:#e8f0ea;"></div>
<div class="a" style="left:676px;top:673.5px;width:6px;height:2.5px;background:#e8f0ea;"></div>
<div class="a" style="left:790px;top:673.5px;width:6px;height:2.5px;background:#e8f0ea;"></div>
<div class="a" style="left:1024px;top:673.5px;width:6px;height:2.5px;background:#e8f0ea;"></div>
<div class="a" style="left:1190px;top:673.5px;width:6px;height:2.5px;background:#e8f0ea;"></div>
<svg class="a" style="left:1181px;top:382px;" width="9" height="8" viewBox="0 0 9 8"><path d="M0.5 0.5h8v3.5L4.5 7.5L0.5 4z" fill="#e0463c"/></svg>
<div class="a" style="left:1184.5px;top:388px;width:1.6px;height:289px;background:#c0433a;"></div>
<div class="a" style="left:310px;top:676.5px;width:1190px;height:4.5px;background:#2a2a2f;"></div>
<div class="a" style="left:420px;top:677px;width:536px;height:3.5px;background:#505055;border-radius:1.7px"></div>
<div class="a" style="left:1495px;top:401px;width:5px;height:276px;background:#1f1f23;"></div>
<div class="a" style="left:1496px;top:420px;width:3px;height:250px;background:#5a5a5f;border-radius:1.5px"></div>
<div class="a" style="left:0px;top:681px;width:1500px;height:22px;background:#1a1a1d;"></div>
<svg class="a" style="left:21px;top:686px;" width="11" height="11" viewBox="0 0 11 11"><circle cx="5.5" cy="2.5" r="2.2" fill="#f0f0f0"/><circle cx="2.5" cy="7.8" r="2.2" fill="#f0f0f0"/><circle cx="8.5" cy="7.8" r="2.2" fill="#f0f0f0"/></svg>
<div class="t" style="left:34px;top:689.25px;font-size:6.1px;color:#e8e8e8;font-weight:bold;">DaVinci Resolve 18.6</div>
<div class="a" style="left:666px;top:681px;width:57px;height:22px;background:#050506;"></div>
<div class="a" style="left:666px;top:701.3px;width:57px;height:1.7px;background:#d8473f;"></div>
<svg class="a" style="left:575.5px;top:684px;" width="11" height="9" viewBox="0 0 11 9"><rect x="1" y="1.5" width="9" height="6" rx="1" fill="none" stroke="#7e7e82"/><rect x="3" y="3.5" width="5" height="2" fill="#7e7e82"/></svg>
<div class="t" style="left:556px;top:694.8px;width:50px;text-align:center;font-size:5.9px;color:#8a8a8e;font-weight:bold">Media</div>
<svg class="a" style="left:632.5px;top:684px;" width="11" height="9" viewBox="0 0 11 9"><path d="M1 8l3-7h6l-3 7z M4 8l3-7" stroke="#7e7e82" fill="none" stroke-width="0.9"/></svg>
<div class="t" style="left:613px;top:694.8px;width:50px;text-align:center;font-size:5.9px;color:#8a8a8e;font-weight:bold">Cut</div>
<svg class="a" style="left:689.0px;top:684px;" width="11" height="9" viewBox="0 0 11 9"><rect x="1" y="2" width="9" height="2.5" fill="#3a8ad8"/><rect x="1" y="5.5" width="9" height="2.5" fill="#3ab070"/><rect x="5" y="0" width="1.2" height="9" fill="#e04a3a"/></svg>
<div class="t" style="left:669.5px;top:694.8px;width:50px;text-align:center;font-size:5.9px;color:#f0f0f0;font-weight:bold">Edit</div>
<svg class="a" style="left:744.5px;top:684px;" width="11" height="9" viewBox="0 0 11 9"><path d="M2 8L8 1M4 3l1-2M8 5l2-1" stroke="#7e7e82" fill="none" stroke-width="1.1"/></svg>
<div class="t" style="left:725px;top:694.8px;width:50px;text-align:center;font-size:5.9px;color:#8a8a8e;font-weight:bold">Fusion</div>
<svg class="a" style="left:800.5px;top:684px;" width="11" height="9" viewBox="0 0 11 9"><circle cx="5.5" cy="4.5" r="3.5" fill="none" stroke="#7e7e82" stroke-dasharray="1.5 1.2"/><circle cx="5.5" cy="4.5" r="1" fill="#7e7e82"/></svg>
<div class="t" style="left:781px;top:694.8px;width:50px;text-align:center;font-size:5.9px;color:#8a8a8e;font-weight:bold">Color</div>
<svg class="a" style="left:857.5px;top:684px;" width="11" height="9" viewBox="0 0 11 9"><path d="M4 8V1.5l4-1v6" stroke="#7e7e82" fill="none"/><circle cx="3" cy="8" r="1.5" fill="#7e7e82"/><circle cx="7" cy="7" r="1.5" fill="#7e7e82"/></svg>
<div class="t" style="left:838px;top:694.8px;width:50px;text-align:center;font-size:5.9px;color:#8a8a8e;font-weight:bold">Fairlight</div>
<svg class="a" style="left:913.5px;top:684px;" width="11" height="9" viewBox="0 0 11 9"><path d="M2 8l2-4l4-3l1 1l-3 4z M2 8l1.5-0.5" stroke="#7e7e82" fill="none" stroke-width="0.9"/></svg>
<div class="t" style="left:894px;top:694.8px;width:50px;text-align:center;font-size:5.9px;color:#8a8a8e;font-weight:bold">Deliver</div>
<svg class="a" style="left:1457px;top:688px;" width="9" height="8" viewBox="0 0 9 8"><path d="M0.5 4L4.5 0.5L8.5 4H7.5V7.5H5.3V5.3H3.7V7.5H1.5V4z" fill="#a0a0a4"/></svg>
<svg class="a" style="left:1480px;top:687px;" width="9" height="9" viewBox="0 0 9 9"><circle cx="4.5" cy="4.5" r="2.8" fill="none" stroke="#a0a0a4" stroke-width="1.6" stroke-dasharray="1.4 0.8"/><circle cx="4.5" cy="4.5" r="1.2" fill="none" stroke="#a0a0a4" stroke-width="0.8"/></svg>
</div></body></html>
